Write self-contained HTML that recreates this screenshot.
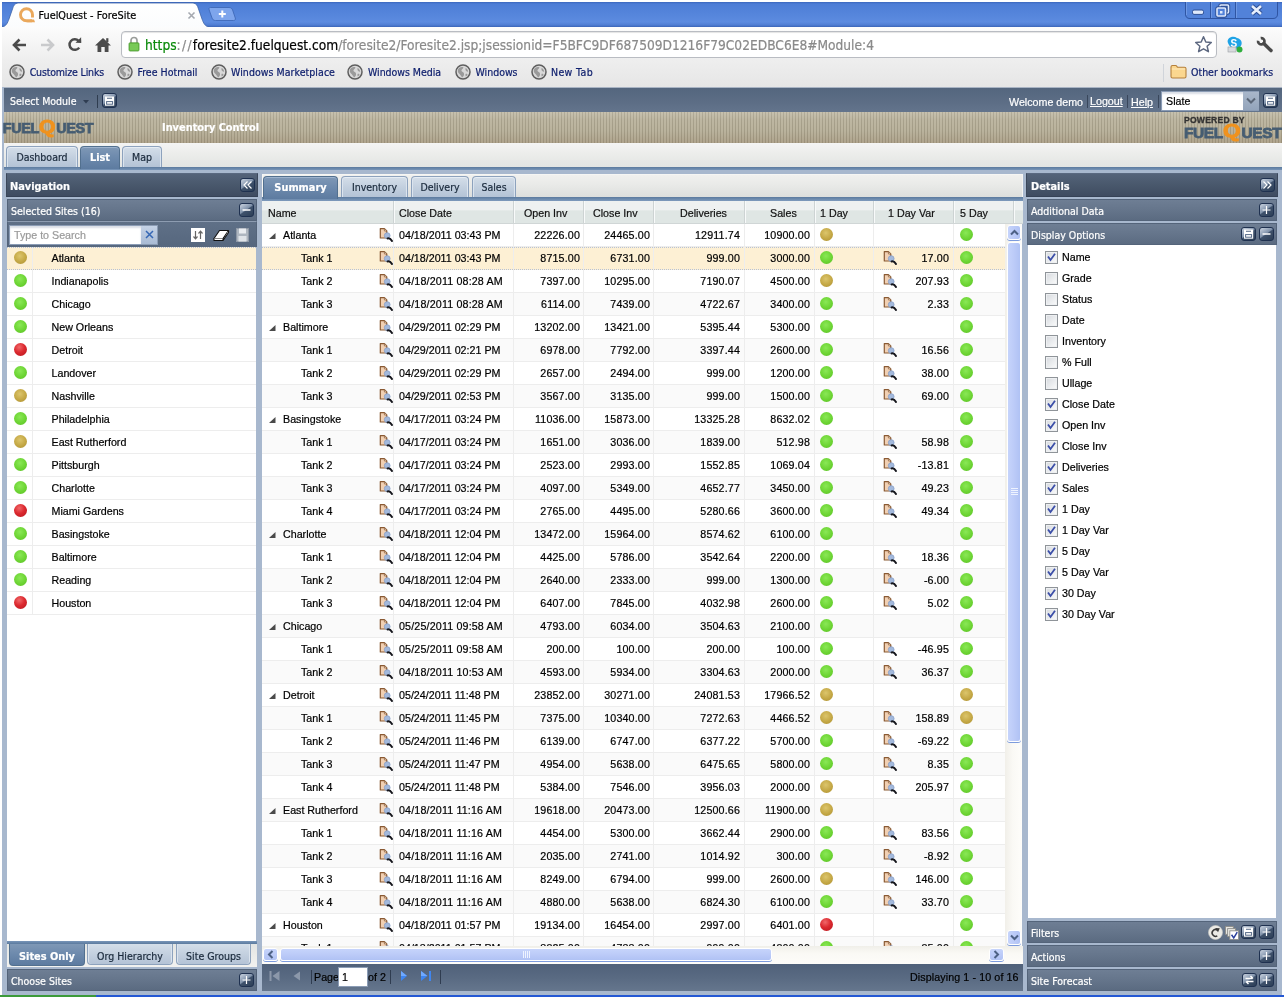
<!DOCTYPE html><html><head><meta charset="utf-8"><title>FuelQuest - ForeSite</title><style>
*{box-sizing:border-box;margin:0;padding:0}
html,body{width:1284px;height:997px;overflow:hidden;background:#fff}
body{position:relative;font-family:"Liberation Sans",sans-serif;font-size:10.6px;color:#000;-webkit-text-stroke:0.2px}
.abs{position:absolute}
.t{position:absolute;white-space:nowrap;line-height:14px;height:14px}
.tah{font-family:"DejaVu Sans Condensed","Liberation Sans",sans-serif;font-size:10.5px}
.tahb{font-family:"DejaVu Sans Condensed","Liberation Sans",sans-serif;font-size:10.9px;font-weight:bold}
svg{position:absolute;overflow:visible}
#win{position:absolute;left:0;top:0;width:1284px;height:997px;overflow:hidden;will-change:transform}
#winbg{position:absolute;left:0;top:0;width:1284px;height:997px;background:#a8b8ce}
/* chrome */
#titlebar{position:absolute;left:0;top:2px;width:1284px;height:25px;background:linear-gradient(#3b67bd 0,#4d7dd6 2px,#5585db 12px,#5c8be0 20px,#4f7dd3 23px,#3a64b8 25px)}
#toolbar{position:absolute;left:0;top:27px;width:1284px;height:33px;background:linear-gradient(#fcfcfc,#eeeeee)}
#bmbar{position:absolute;left:0;top:60px;width:1284px;height:27px;background:linear-gradient(#eeeeee,#e6e6e6)}
#url{position:absolute;left:121px;top:31px;width:1096px;height:27px;border:1px solid #b9bcc2;border-radius:4px;background:#fff;box-shadow:inset 0 1px 1px #e4e4e4}
.bm{position:absolute;top:64.5px;height:14px;line-height:14px;font-family:"DejaVu Sans Condensed","Liberation Sans",sans-serif;font-size:10.5px;color:#10216e;white-space:nowrap}
/* app */
#appbar{position:absolute;left:4px;top:87px;width:1278px;height:25px;background:linear-gradient(#54667e,#5b6c84 50%,#63748c);border-top:1px solid #a9b4c4}
#banner{position:absolute;left:4px;top:112px;width:1278px;height:31px;background:repeating-linear-gradient(90deg,#bab39d 0,#bab39d 2px,#a39c86 2px,#a39c86 3px)}
#banner:after{content:"";position:absolute;left:0;top:0;right:0;bottom:0;background:linear-gradient(rgba(255,255,255,.18),rgba(255,255,255,.05) 25%,rgba(255,255,255,0) 60%,rgba(90,50,20,.12))}
#tabstrip{position:absolute;left:4px;top:143px;width:1278px;height:24px;background:linear-gradient(#f4f4f3,#ebecea 50%,#e3e5e3)}
#tabline{position:absolute;left:4px;top:167px;width:1278px;height:3px;background:linear-gradient(#5b7a9e,#7895b8)}
.tab{position:absolute;height:21px;border:1px solid #8da2bd;border-bottom:none;border-radius:4px 4px 0 0;background:linear-gradient(#d4dee9,#c3d0df 50%,#b4c3d6);text-align:center;line-height:20px;font-family:"DejaVu Sans Condensed","Liberation Sans",sans-serif;font-size:10.5px;color:#1a2a3c;box-shadow:inset 0 1px 0 #e6edf4, inset 1px 0 0 #dbe4ee, inset -1px 0 0 #dbe4ee}
.tab.on{background:linear-gradient(#7f98b6,#6c89ac 50%,#5d7ba0);border-color:#52708f;color:#fff;font-weight:bold;font-size:10.9px;box-shadow:inset 0 1px 0 #9db3ce;height:23px}
</style></head><body><div id="win"><div id="winbg"></div>
<div id="titlebar"></div>
<svg style="left:2px;top:2px" width="240" height="26" viewBox="0 0 240 26"><defs><linearGradient id="tg" x1="0" y1="0" x2="0" y2="1"><stop offset="0" stop-color="#ffffff"/><stop offset="1" stop-color="#fbfcfd"/></linearGradient></defs><path d="M0 25.500 L0 25 C4 24.500 5.500 21 7 17 L10.500 7 C11.500 3.500 12.500 1.500 16 1 L191 1 C194.500 1.500 195.500 3.500 196.500 7 L200 17 C201.500 21 203 24.500 207 25 L207 25.500 Z" fill="url(#tg)"/><path d="M0 25 C4 24.500 5.500 21 7 17 L10.500 7 C11.500 3.500 12.500 1.500 16 1 L191 1 C194.500 1.500 195.500 3.500 196.500 7 L200 17 C201.500 21 203 24.500 207 25" fill="none" stroke="#3c63a8" stroke-width="0.8"/><path d="M208.500 5.500 L227 5.500 C229 5.500 230 6.500 230.600 8 L233.300 16 C233.800 17.600 233 18.500 231.500 18.500 L213.500 18.500 C211.500 18.500 210.600 17.600 210 16 L207.200 8 C206.700 6.500 207 5.500 208.500 5.500 Z" fill="#7ea5ec" stroke="#3f69b8" stroke-width="0.9"/><path d="M220.300 8.500 v7 M216.800 12 h7" stroke="#fff" stroke-width="2"/></svg>
<svg style="left:19px;top:7px" width="17" height="17" viewBox="0 0 17 17"><path d="M13 13.700 H7.500 A6 6 0 1 1 13.500 7.700 V 10.500" fill="none" stroke="#eaa85c" stroke-width="2.900"/><path d="M11.500 12.400 H15 L16 15.200 H8 Z" fill="#eaa85c"/></svg>
<div class="t tah" style="left:38.5px;top:8.5px;font-size:10.8px;color:#000">FuelQuest - ForeSite</div>
<svg style="left:187px;top:11px" width="9" height="9" viewBox="0 0 9 9"><path d="M1.5 1.5 L7.5 7.5 M7.5 1.5 L1.5 7.5" stroke="#a5a9b0" stroke-width="1.6"/></svg>
<svg style="left:1185px;top:-2px" width="96" height="22" viewBox="0 0 96 22"><path d="M0.500 0 L0.500 16 C0.500 19 2 20.500 5 20.500 L88 20.500 C91 20.500 92.500 19 92.500 16 L92.500 0 Z" fill="#5282d9" stroke="#2f55a3" stroke-width="1"/><path d="M25.500 0 V20 M50.500 0 V20" stroke="#2f55a3" stroke-width="1"/><path d="M26.500 0 V20 M51.500 0 V20 M1.500 0 V17" stroke="#7ba2ea" stroke-width="1" opacity=".7"/><rect x="7.500" y="12" width="11" height="4.400" rx="1.500" fill="#dfe9fb" stroke="#2c4f97" stroke-width="1"/><rect x="35" y="7" width="8.500" height="8" rx="1" fill="#5282d9" stroke="#2c4f97" stroke-width="3.400"/><rect x="35" y="7" width="8.500" height="8" rx="1" fill="none" stroke="#dfe9fb" stroke-width="1.600"/><rect x="32" y="10" width="8.500" height="8" rx="1" fill="#5282d9" stroke="#2c4f97" stroke-width="3.400"/><rect x="32" y="10" width="8.500" height="8" rx="1" fill="#5282d9" stroke="#dfe9fb" stroke-width="1.600"/><rect x="35" y="13" width="2.500" height="2.500" fill="#dfe9fb"/><path d="M67 8 L76 16 M76 8 L67 16" stroke="#2c4f97" stroke-width="4.600"/><path d="M67 8 L76 16 M76 8 L67 16" stroke="#e6eefc" stroke-width="2.600"/></svg>
<div id="toolbar"></div><div id="bmbar"></div><div id="url"></div>
<svg style="left:10px;top:35px" width="20" height="20" viewBox="0 0 20 20"><path d="M16 10 H5 M9.500 4.500 L4 10 L9.500 15.500" fill="none" stroke="#4b4b4b" stroke-width="2.6" stroke-linejoin="miter"/></svg>
<svg style="left:38px;top:35px" width="20" height="20" viewBox="0 0 20 20"><path d="M3 10 H14 M9.500 4.500 L15 10 L9.500 15.500" fill="none" stroke="#c9cacc" stroke-width="2.6"/></svg>
<svg style="left:65px;top:35px" width="20" height="20" viewBox="0 0 20 20"><path d="M14.200 12.600 A5.300 5.300 0 1 1 13.600 5.800" fill="none" stroke="#4b4b4b" stroke-width="2.500"/><path d="M10.500 7.800 L16.300 8 L16.100 2.200 Z" fill="#4b4b4b"/></svg>
<svg style="left:93px;top:35px" width="20" height="20" viewBox="0 0 20 20"><path d="M2 10.500 L10 3 L18 10.500 L15.500 10.500 L15.500 17 L11.700 17 L11.700 12 L8.300 12 L8.300 17 L4.500 17 L4.500 10.500 Z" fill="#4b4b4b"/><rect x="13.200" y="3.200" width="2.200" height="4" fill="#4b4b4b"/></svg>
<svg style="left:128px;top:36px" width="12" height="16" viewBox="0 0 12 16"><path d="M3 7 V4.500 A3 3 0 0 1 9 4.500 V7" fill="none" stroke="#9a9d9a" stroke-width="1.700"/><rect x="1" y="6.800" width="10" height="8.200" rx="1" fill="#6cc24a" stroke="#4f9a35" stroke-width="0.8"/><path d="M2 9 H10 M2 11 H10 M2 13 H10" stroke="#8ed66f" stroke-width="0.8"/></svg>
<div class="t tah" style="left:145px;top:36px;height:18px;line-height:18px;font-size:13.64px;color:#8a8a8a"><span style="color:#0b8a0b">https</span><span style="letter-spacing:1.3px">://</span><span style="color:#000">foresite2.fuelquest.com</span>/foresite2/Foresite2.jsp;jsessionid=F5BFC9DF687509D1216F79C02EDBC6E8#Module:4</div>
<svg style="left:1194px;top:35px" width="19" height="19" viewBox="0 0 19 19"><path d="M9.500 1.800 L11.800 7 L17.300 7.500 L13.100 11.200 L14.400 16.700 L9.500 13.800 L4.600 16.700 L5.900 11.200 L1.700 7.500 L7.200 7 Z" fill="#fff" stroke="#5d6880" stroke-width="1.500" stroke-linejoin="round"/></svg>
<svg style="left:1225px;top:35px" width="20" height="20" viewBox="0 0 20 20"><path d="M3 8 C1 3 8 0 12 3 C17 4 18 9 15 12 C12 15 5 14 3 8 Z" fill="#1fa3e6"/><text x="5.500" y="11.500" font-family="Liberation Sans,sans-serif" font-weight="bold" font-size="10" fill="#fff">S</text><rect x="3" y="12" width="8" height="5" fill="#d8dadd" stroke="#9a9ea4" stroke-width="0.600"/><circle cx="14.500" cy="14.500" r="3" fill="#2fae3c"/></svg>
<svg style="left:1256px;top:36px" width="18" height="18" viewBox="0 0 18 18"><path d="M4.720 2.100 A3.200 3.200 0 1 1 2.100 4.720" fill="none" stroke="#4a4a4a" stroke-width="2.700"/><path d="M7.800 7.600 L15 14.600" stroke="#4a4a4a" stroke-width="3.500" stroke-linecap="round"/></svg>
<svg style="left:9px;top:64px" width="16" height="16" viewBox="0 0 16 16"><circle cx="8" cy="8" r="7" fill="#d9d9d9" stroke="#5e5e5e" stroke-width="1.500"/><path d="M3 5.500 C4.500 3 7 2.500 8.500 3.500 C8 5 6 5.500 6.500 7 C7 8 8.500 8 9 9.500 C9.500 11.500 8 13 7 13.500 C6 11.500 5 10.500 4 9.500 C3 8.500 2.500 7 3 5.500 Z M10.500 4 C12 4.500 13 6 13.200 7.500 C12 8 11 7 10.500 6 Z M10.500 10 C11.500 9.500 12.500 10 12.500 11 C12 12 11 12.500 10.500 12 Z" fill="#9a9a9a"/></svg>
<div class="bm" style="left:29.7px;letter-spacing:-0.171px">Customize Links</div>
<svg style="left:117px;top:64px" width="16" height="16" viewBox="0 0 16 16"><circle cx="8" cy="8" r="7" fill="#d9d9d9" stroke="#5e5e5e" stroke-width="1.500"/><path d="M3 5.500 C4.500 3 7 2.500 8.500 3.500 C8 5 6 5.500 6.500 7 C7 8 8.500 8 9 9.500 C9.500 11.500 8 13 7 13.500 C6 11.500 5 10.500 4 9.500 C3 8.500 2.500 7 3 5.500 Z M10.500 4 C12 4.500 13 6 13.200 7.500 C12 8 11 7 10.500 6 Z M10.500 10 C11.500 9.500 12.500 10 12.500 11 C12 12 11 12.500 10.500 12 Z" fill="#9a9a9a"/></svg>
<div class="bm" style="left:137.5px;letter-spacing:0.018px">Free Hotmail</div>
<svg style="left:210.5px;top:64px" width="16" height="16" viewBox="0 0 16 16"><circle cx="8" cy="8" r="7" fill="#d9d9d9" stroke="#5e5e5e" stroke-width="1.500"/><path d="M3 5.500 C4.500 3 7 2.500 8.500 3.500 C8 5 6 5.500 6.500 7 C7 8 8.500 8 9 9.500 C9.500 11.500 8 13 7 13.500 C6 11.500 5 10.500 4 9.500 C3 8.500 2.500 7 3 5.500 Z M10.500 4 C12 4.500 13 6 13.200 7.500 C12 8 11 7 10.500 6 Z M10.500 10 C11.500 9.500 12.500 10 12.500 11 C12 12 11 12.500 10.500 12 Z" fill="#9a9a9a"/></svg>
<div class="bm" style="left:231px;letter-spacing:0.052px">Windows Marketplace</div>
<svg style="left:347px;top:64px" width="16" height="16" viewBox="0 0 16 16"><circle cx="8" cy="8" r="7" fill="#d9d9d9" stroke="#5e5e5e" stroke-width="1.500"/><path d="M3 5.500 C4.500 3 7 2.500 8.500 3.500 C8 5 6 5.500 6.500 7 C7 8 8.500 8 9 9.500 C9.500 11.500 8 13 7 13.500 C6 11.500 5 10.500 4 9.500 C3 8.500 2.500 7 3 5.500 Z M10.500 4 C12 4.500 13 6 13.200 7.500 C12 8 11 7 10.500 6 Z M10.500 10 C11.500 9.500 12.500 10 12.500 11 C12 12 11 12.500 10.500 12 Z" fill="#9a9a9a"/></svg>
<div class="bm" style="left:368px;letter-spacing:-0.041px">Windows Media</div>
<svg style="left:454.5px;top:64px" width="16" height="16" viewBox="0 0 16 16"><circle cx="8" cy="8" r="7" fill="#d9d9d9" stroke="#5e5e5e" stroke-width="1.500"/><path d="M3 5.500 C4.500 3 7 2.500 8.500 3.500 C8 5 6 5.500 6.500 7 C7 8 8.500 8 9 9.500 C9.500 11.500 8 13 7 13.500 C6 11.500 5 10.500 4 9.500 C3 8.500 2.500 7 3 5.500 Z M10.500 4 C12 4.500 13 6 13.200 7.500 C12 8 11 7 10.500 6 Z M10.500 10 C11.500 9.500 12.500 10 12.500 11 C12 12 11 12.500 10.500 12 Z" fill="#9a9a9a"/></svg>
<div class="bm" style="left:475.5px;letter-spacing:-0.022px">Windows</div>
<svg style="left:530.5px;top:64px" width="16" height="16" viewBox="0 0 16 16"><circle cx="8" cy="8" r="7" fill="#d9d9d9" stroke="#5e5e5e" stroke-width="1.500"/><path d="M3 5.500 C4.500 3 7 2.500 8.500 3.500 C8 5 6 5.500 6.500 7 C7 8 8.500 8 9 9.500 C9.500 11.500 8 13 7 13.500 C6 11.500 5 10.500 4 9.500 C3 8.500 2.500 7 3 5.500 Z M10.500 4 C12 4.500 13 6 13.200 7.500 C12 8 11 7 10.500 6 Z M10.500 10 C11.500 9.500 12.500 10 12.500 11 C12 12 11 12.500 10.500 12 Z" fill="#9a9a9a"/></svg>
<div class="bm" style="left:551px;letter-spacing:0.368px">New Tab</div>
<div class="abs" style="left:1163px;top:64px;width:1px;height:18px;background:#d0d4da"></div>
<svg style="left:1170px;top:64px" width="17" height="15" viewBox="0 0 17 15"><path d="M1 3 C1 2 1.500 1.500 2.500 1.500 L6 1.500 L7.500 3.200 L14.500 3.200 C15.500 3.200 16 3.700 16 4.700 L16 12.500 C16 13.500 15.500 14 14.500 14 L2.500 14 C1.500 14 1 13.500 1 12.500 Z" fill="#fbd78f" stroke="#b5803c" stroke-width="1.100"/><path d="M1.800 5 H15.200" stroke="#fde9bd" stroke-width="1"/></svg>
<div class="bm" style="left:1191px">Other bookmarks</div>
<style>
.tbtn{position:absolute;width:15px;height:14px;border:1px solid #1f3150;border-radius:3px;background:linear-gradient(145deg,#c9d2de 0,#a3b1c4 25%,#7f91a9 46%,#3f526c 52%,#2c3e56 100%)}
.ph{position:absolute;height:24px;background:linear-gradient(#546379,#49586c 50%,#3f4c61);border:1px solid #3b485d;border-color:#5a6980 #3b475a #364256 #3b475a}
.sh{position:absolute;height:22px;background:linear-gradient(#6e7e94,#65758b 50%,#5b6b81);border:1px solid #54647a}
.pt{position:absolute;color:#fff;white-space:nowrap;line-height:14px;height:14px}
.wbody{position:absolute;background:#fff}
</style>
<div id="appbar"></div><div id="banner"></div><div id="tabstrip"></div><div id="tabline"></div>
<div class="pt tah" style="left:10px;top:94px">Select Module</div>
<svg style="left:83px;top:100px" width="6" height="3.500" viewBox="0 0 6 3.500"><path d="M0 0 H6 L3 3.500 Z" fill="#2f3d52"/></svg>
<div class="abs" style="left:97px;top:95px;width:1px;height:13px;background:#2f3d50"></div>
<div class="tbtn" style="left:102px;top:93px;height:15px"></div>
<svg style="left:102px;top:93.5px" width="15" height="14" viewBox="0 0 15 14"><rect x="3" y="2.500" width="9.200" height="9.200" fill="#fff"/><rect x="5" y="3.700" width="5" height="1.300" fill="#7c8ba1"/><rect x="4.600" y="7.600" width="6" height="2.600" fill="#fff" stroke="#566a88" stroke-width="1"/></svg>
<div class="pt" style="left:1009px;top:95px;font-size:10.7px">Welcome demo</div>
<div class="abs" style="left:1087px;top:95px;width:1px;height:13px;background:#39475c"></div>
<div class="pt" style="left:1090px;top:94px;font-size:10.7px;text-decoration:underline">Logout</div>
<div class="abs" style="left:1127px;top:95px;width:1px;height:13px;background:#39475c"></div>
<div class="pt" style="left:1131px;top:95px;font-size:10.7px;text-decoration:underline">Help</div>
<div class="abs" style="left:1158px;top:95px;width:1px;height:13px;background:#39475c"></div>
<div class="abs" style="left:1161px;top:91px;width:98px;height:20px;background:#fff;border:1px solid #8b9cb5;box-shadow:inset 0 2px 2px #d9dee6"></div>
<div class="t" style="left:1166px;top:94px;font-size:10.7px;color:#000">Slate</div>
<div class="abs" style="left:1243px;top:92px;width:16px;height:18px;background:linear-gradient(#a9b7ca,#93a4bb)"></div>
<svg style="left:1246px;top:97px" width="10" height="8" viewBox="0 0 10 8"><path d="M1 1.500 L5 5.500 L9 1.500" fill="none" stroke="#5b6778" stroke-width="2"/></svg>
<div class="tbtn" style="left:1263px;top:93px;height:15px"></div>
<svg style="left:1263px;top:93.5px" width="15" height="14" viewBox="0 0 15 14"><rect x="3" y="2.500" width="9.200" height="9.200" fill="#fff"/><rect x="5" y="3.700" width="5" height="1.300" fill="#7c8ba1"/><rect x="4.600" y="7.600" width="6" height="2.600" fill="#fff" stroke="#566a88" stroke-width="1"/></svg>
<div class="t" style="left:2.8px;top:120px;font-family:Liberation Sans,sans-serif;font-weight:bold;font-size:14.40px;color:#465d72;letter-spacing:-0.35px;-webkit-text-stroke:0.75px #465d72;height:16.0px;line-height:16.0px">FUEL<span style="display:inline-block;width:17.3px"></span>UEST</div>
<div class="t" style="left:39.4px;top:114.6px;font-family:Liberation Sans,sans-serif;font-weight:bold;font-size:17.6px;color:#f0921d;-webkit-text-stroke:0.90px #f0921d;height:24.0px;line-height:24.0px;transform:scaleX(1.2);transform-origin:0 0">Q</div>
<div class="pt tahb" style="left:162px;top:121px;font-size:10.9px">Inventory Control</div>
<div class="t" style="left:1184px;top:114.5px;height:10px;line-height:10px;font-family:Liberation Sans,sans-serif;font-weight:bold;font-size:8.6px;color:#333;letter-spacing:.2px;-webkit-text-stroke:0.3px #333">POWERED BY</div>
<div class="t" style="left:1184px;top:123.5px;font-family:Liberation Sans,sans-serif;font-weight:bold;font-size:15.48px;color:#465d72;letter-spacing:-0.38px;-webkit-text-stroke:0.81px #465d72;height:17.2px;line-height:17.2px">FUEL<span style="display:inline-block;width:18.6px"></span>UEST</div>
<div class="t" style="left:1223.3px;top:117.7px;font-family:Liberation Sans,sans-serif;font-weight:bold;font-size:18.9px;color:#f0921d;-webkit-text-stroke:0.97px #f0921d;height:25.8px;line-height:25.8px;transform:scaleX(1.2);transform-origin:0 0">Q</div>
<div class="tab" style="left:6px;top:146px;width:72px">Dashboard</div>
<div class="tab on" style="left:80px;top:146px;width:40px;line-height:21px">List</div>
<div class="tab" style="left:122px;top:146px;width:40px">Map</div>
<style>
.dot{position:absolute;width:13px;height:13px;border-radius:50%}
.dot.g{background:radial-gradient(circle at 45% 38%,#8ae856 0,#6fd636 50%,#58be22 100%)}
.dot.y{background:radial-gradient(circle at 45% 38%,#dcc56c 0,#c6aa48 50%,#ab8e2f 100%)}
.dot.r{background:radial-gradient(circle at 40% 32%,#f0686a 0,#dc2a30 45%,#b5151c 100%)}
.lrow{position:absolute;left:7px;width:249px;height:23px;border-bottom:1px solid #ededed;background:#fff}
.lrow .sep{position:absolute;left:25px;top:0;width:1px;height:22px;background:#ededed}
.lrow .nm{position:absolute;left:44.5px;top:4px;line-height:14px;white-space:nowrap;font-size:10.7px}
.lrow .dot{left:7px;top:4px}
.lrow.sel{background:#fdf0d4;border-bottom:1px dotted #b7c2d6;border-top:1px dotted #b7c2d6}
.btab{position:absolute;top:944px;height:21px;border:1px solid #8da2bd;border-top:none;border-radius:0 0 4px 4px;background:linear-gradient(#d4dee9,#c3d0df 50%,#b4c3d6);text-align:center;line-height:25px;font-family:"DejaVu Sans Condensed","Liberation Sans",sans-serif;font-size:10.5px;color:#1a2a3c;box-shadow:inset 1px 0 0 #dbe4ee, inset -1px 0 0 #dbe4ee}
.btab.on{background:linear-gradient(#7f98b6,#6c89ac 50%,#5d7ba0);border-color:#52708f;color:#fff;font-weight:bold;font-size:10.9px;box-shadow:none;height:22px}
</style>
<div class="ph" style="left:6px;top:173px;width:252px"></div>
<div class="pt tahb" style="left:10px;top:180px">Navigation</div>
<div class="tbtn" style="left:240px;top:178px;height:14px"></div>
<svg style="left:240px;top:178px" width="15" height="14" viewBox="0 0 15 14"><path d="M7.500 3.500 L4 7 L7.500 10.500 M11.500 3.500 L8 7 L11.500 10.500" fill="none" stroke="#fff" stroke-width="1.200"/></svg>
<div class="sh" style="left:7px;top:199px;width:250px"></div>
<div class="pt tah" style="left:11px;top:204px">Selected Sites (16)</div>
<div class="tbtn" style="left:239px;top:203px;height:14px"></div>
<svg style="left:239px;top:203px" width="15" height="14" viewBox="0 0 15 14"><path d="M3.500 7 H11.500" stroke="#fff" stroke-width="1.500"/></svg>
<div class="abs" style="left:7px;top:221px;width:250px;height:26px;background:linear-gradient(#5f7087,#56677e);border-left:1px solid #54647a;border-right:1px solid #54647a;border-top:1px solid #8d9cb1"></div>
<div class="abs" style="left:9px;top:225px;width:133px;height:20px;background:#fff;border:1px solid #8b9cb5;box-shadow:inset 0 2px 2px #d9dee6"></div>
<div class="t" style="left:14px;top:228px;font-size:10.7px;color:#9a9a9a">Type to Search</div>
<div class="abs" style="left:141px;top:225px;width:17px;height:20px;background:linear-gradient(#c4d2e6,#a9bbd4);border:1px solid #8b9cb5;border-left:none"></div>
<svg style="left:145px;top:230px" width="9" height="9" viewBox="0 0 9 9"><path d="M1 1 L8 8 M8 1 L1 8" stroke="#3567b5" stroke-width="1.500"/></svg>
<svg style="left:191px;top:228px" width="14" height="14" viewBox="0 0 14 14"><rect x="0" y="0" width="14" height="14" fill="#fff"/><path d="M4.500 3 V10.500 M2.500 8.500 L4.500 10.800 L6.500 8.500 M9.500 11 V3.500 M7.500 5.500 L9.500 3.200 L11.500 5.500" fill="none" stroke="#666" stroke-width="1.200"/></svg>
<svg style="left:213px;top:229px" width="17" height="13" viewBox="0 0 17 13"><path d="M6.500 1.500 L15.500 1.500 L10 9.500 L1 9.500 Z" fill="#fff" stroke="#111" stroke-width="1.100" stroke-linejoin="round"/><path d="M1 9.500 L1 11.500 L10 11.500 L10 9.500 M10 11.500 L15.500 3.500 L15.500 1.500" fill="#fff" stroke="#111" stroke-width="1.100" stroke-linejoin="round"/></svg>
<svg style="left:236px;top:228px" width="13" height="14" viewBox="0 0 13 14"><rect x="0.500" y="0.500" width="12" height="13" fill="#aeb6c0" stroke="#8e98a6" stroke-width="1"/><rect x="3" y="0.500" width="7" height="5" fill="#e9ecf0"/><rect x="2.500" y="8" width="8" height="5.500" fill="#dfe3e8"/></svg>
<div class="wbody" style="left:7px;top:247px;width:249px;height:694px"></div>
<div class="lrow sel" style="top:247px;height:23px"><div class="dot y" style="top:3px"></div><div class="sep" style="top:-1px"></div><div class="nm" style="top:3px">Atlanta</div></div>
<div class="lrow" style="top:270px"><div class="dot g"></div><div class="sep"></div><div class="nm">Indianapolis</div></div>
<div class="lrow" style="top:293px"><div class="dot g"></div><div class="sep"></div><div class="nm">Chicago</div></div>
<div class="lrow" style="top:316px"><div class="dot g"></div><div class="sep"></div><div class="nm">New Orleans</div></div>
<div class="lrow" style="top:339px"><div class="dot r"></div><div class="sep"></div><div class="nm">Detroit</div></div>
<div class="lrow" style="top:362px"><div class="dot g"></div><div class="sep"></div><div class="nm">Landover</div></div>
<div class="lrow" style="top:385px"><div class="dot y"></div><div class="sep"></div><div class="nm">Nashville</div></div>
<div class="lrow" style="top:408px"><div class="dot g"></div><div class="sep"></div><div class="nm">Philadelphia</div></div>
<div class="lrow" style="top:431px"><div class="dot y"></div><div class="sep"></div><div class="nm">East Rutherford</div></div>
<div class="lrow" style="top:454px"><div class="dot g"></div><div class="sep"></div><div class="nm">Pittsburgh</div></div>
<div class="lrow" style="top:477px"><div class="dot g"></div><div class="sep"></div><div class="nm">Charlotte</div></div>
<div class="lrow" style="top:500px"><div class="dot r"></div><div class="sep"></div><div class="nm">Miami Gardens</div></div>
<div class="lrow" style="top:523px"><div class="dot g"></div><div class="sep"></div><div class="nm">Basingstoke</div></div>
<div class="lrow" style="top:546px"><div class="dot g"></div><div class="sep"></div><div class="nm">Baltimore</div></div>
<div class="lrow" style="top:569px"><div class="dot g"></div><div class="sep"></div><div class="nm">Reading</div></div>
<div class="lrow" style="top:592px"><div class="dot r"></div><div class="sep"></div><div class="nm">Houston</div></div>
<div class="abs" style="left:7px;top:941px;width:250px;height:3px;background:linear-gradient(#7895b8,#5b7a9e)"></div>
<div class="abs" style="left:7px;top:944px;width:250px;height:23px;background:linear-gradient(#e3e5e3,#f2f2f0)"></div>
<div class="btab on" style="left:9px;width:76px">Sites Only</div>
<div class="btab" style="left:87px;width:86px">Org Hierarchy</div>
<div class="btab" style="left:176px;width:75px">Site Groups</div>
<div class="sh" style="left:7px;top:969px;width:250px"></div>
<div class="pt tah" style="left:11px;top:974px">Choose Sites</div>
<div class="tbtn" style="left:239px;top:973px;height:14px"></div>
<svg style="left:239px;top:973px" width="15" height="14" viewBox="0 0 15 14"><path d="M7.500 3 V11 M3.500 7 H11.500" stroke="#fff" stroke-width="1.200"/></svg>
<style>
#gtabs{position:absolute;left:262px;top:174px;width:761px;height:23px;background:linear-gradient(#f1f1ef,#e8e9e7 50%,#dddfdd);border:1px solid #f6f6f4;border-bottom:none}
.gtab{position:absolute;top:176px;height:21px;border:1px solid #8da2bd;border-bottom:none;border-radius:4px 4px 0 0;background:linear-gradient(#d4dee9,#c3d0df 50%,#b4c3d6);text-align:center;line-height:20px;font-family:"DejaVu Sans Condensed","Liberation Sans",sans-serif;font-size:10.5px;color:#1a2a3c;box-shadow:inset 0 1px 0 #e6edf4, inset 1px 0 0 #dbe4ee, inset -1px 0 0 #dbe4ee}
.gtab.on{background:linear-gradient(#7f98b6,#6c89ac 50%,#5d7ba0);border-color:#52708f;color:#fff;font-weight:bold;font-size:10.9px;box-shadow:inset 0 1px 0 #9db3ce;height:23px;line-height:21px}
#ghead{position:absolute;left:262px;top:201px;width:761px;height:23px;background:linear-gradient(#eef1f1 0,#eef1f1 40%,#dfe6e4 45%,#dfe6e4 100%);border-bottom:1px solid #d0d6d6}
.hc{position:absolute;top:206px;line-height:14px;height:14px;font-size:10.7px;color:#111;white-space:nowrap}
.hs{position:absolute;top:201px;width:2px;height:22px;border-left:1px solid #cdd3d3;border-right:1px solid #f8fafa}
#gbody{position:absolute;left:262px;top:224px;width:743px;height:722px;overflow:hidden;background:#fff}
.gr{position:absolute;left:0;width:743px;height:23px;border-bottom:1px solid #ededed;background:#fff}
.gr.alt{background:#fafafa}
.gr.sel{background:#fdf0d4;border-bottom:1px dotted #b7c2d6;border-top:1px dotted #b7c2d6}
.gr div{position:absolute;top:4px;line-height:14px;height:14px;font-size:10.7px;white-space:nowrap}
.gr .n{text-align:right;letter-spacing:0.15px}
.gr .cs{top:0;width:1px;height:22px;background:#ededed}
.gr .dot{top:4px;width:13px;height:13px}
</style>
<div id="gtabs"></div>
<div class="abs" style="left:262px;top:197px;width:761px;height:4px;background:linear-gradient(#5b7a9e,#7f9bbd)"></div>
<div class="gtab on" style="left:263px;width:75px">Summary</div>
<div class="gtab" style="left:341px;width:67px">Inventory</div>
<div class="gtab" style="left:411px;width:58px">Delivery</div>
<div class="gtab" style="left:472px;width:44px">Sales</div>
<div id="ghead"></div>
<div class="hc" style="left:268px">Name</div>
<div class="hc" style="left:399px">Close Date</div>
<div class="hc" style="left:524px">Open Inv</div>
<div class="hc" style="left:593px">Close Inv</div>
<div class="hc" style="left:680px">Deliveries</div>
<div class="hc" style="left:770px">Sales</div>
<div class="hc" style="left:820px">1 Day</div>
<div class="hc" style="left:888px">1 Day Var</div>
<div class="hc" style="left:960px">5 Day</div>
<div class="hs" style="left:393px"></div>
<div class="hs" style="left:513px"></div>
<div class="hs" style="left:583px"></div>
<div class="hs" style="left:653px"></div>
<div class="hs" style="left:744px"></div>
<div class="hs" style="left:814px"></div>
<div class="hs" style="left:873px"></div>
<div class="hs" style="left:953px"></div>
<div class="hs" style="left:1013px"></div>
<div id="gbody">
<div class="gr" style="top:0px">
<svg style="left:7px;top:9px" width="7" height="6" viewBox="0 0 7 6"><path d="M6.500 0 L6.500 6 L0 6 Z" fill="#4a4a4a"/></svg>
<div style="left:21px;top:4px">Atlanta</div>
<svg style="left:117px;top:3px" width="14" height="15" viewBox="0 0 14 15"><path d="M1.300 1.600 H5.400 L7.800 4 V11 H1.300 Z" fill="#f1d0b3" stroke="#8a5a33" stroke-width="1.200" stroke-linejoin="round"/><path d="M5.400 1.600 V4 H7.800 Z" fill="#fdf0e2" stroke="#8a5a33" stroke-width="0.700"/><circle cx="8.200" cy="8.600" r="2.900" fill="#a3b9dc" stroke="#8199c4" stroke-width="0.700"/><path d="M8.600 11.400 Q11.200 11 13 14" fill="none" stroke="#15161c" stroke-width="2" stroke-linecap="round"/></svg>
<div style="left:137px;top:4px">04/18/2011 03:43 PM</div>
<div class="n" style="left:248px;width:70px;top:4px">22226.00</div>
<div class="n" style="left:318px;width:70px;top:4px">24465.00</div>
<div class="n" style="left:408px;width:70px;top:4px">12911.74</div>
<div class="n" style="left:478px;width:70px;top:4px">10900.00</div>
<div class="dot y" style="left:558px;top:4px"></div>
<div class="dot g" style="left:698px;top:4px"></div>
<div class="cs" style="left:131px;top:0px"></div>
<div class="cs" style="left:251px;top:0px"></div>
<div class="cs" style="left:321px;top:0px"></div>
<div class="cs" style="left:391px;top:0px"></div>
<div class="cs" style="left:482px;top:0px"></div>
<div class="cs" style="left:552px;top:0px"></div>
<div class="cs" style="left:611px;top:0px"></div>
<div class="cs" style="left:691px;top:0px"></div>
</div>
<div class="gr sel" style="top:23px;height:23px">
<div style="left:39px;top:3px">Tank 1</div>
<svg style="left:117px;top:2px" width="14" height="15" viewBox="0 0 14 15"><path d="M1.300 1.600 H5.400 L7.800 4 V11 H1.300 Z" fill="#f1d0b3" stroke="#8a5a33" stroke-width="1.200" stroke-linejoin="round"/><path d="M5.400 1.600 V4 H7.800 Z" fill="#fdf0e2" stroke="#8a5a33" stroke-width="0.700"/><circle cx="8.200" cy="8.600" r="2.900" fill="#a3b9dc" stroke="#8199c4" stroke-width="0.700"/><path d="M8.600 11.400 Q11.200 11 13 14" fill="none" stroke="#15161c" stroke-width="2" stroke-linecap="round"/></svg>
<div style="left:137px;top:3px">04/18/2011 03:43 PM</div>
<div class="n" style="left:248px;width:70px;top:3px">8715.00</div>
<div class="n" style="left:318px;width:70px;top:3px">6731.00</div>
<div class="n" style="left:408px;width:70px;top:3px">999.00</div>
<div class="n" style="left:478px;width:70px;top:3px">3000.00</div>
<div class="dot g" style="left:558px;top:3px"></div>
<svg style="left:620.5px;top:2px" width="14" height="15" viewBox="0 0 14 15"><path d="M1.300 1.600 H5.400 L7.800 4 V11 H1.300 Z" fill="#f1d0b3" stroke="#8a5a33" stroke-width="1.200" stroke-linejoin="round"/><path d="M5.400 1.600 V4 H7.800 Z" fill="#fdf0e2" stroke="#8a5a33" stroke-width="0.700"/><circle cx="8.200" cy="8.600" r="2.900" fill="#a3b9dc" stroke="#8199c4" stroke-width="0.700"/><path d="M8.600 11.400 Q11.200 11 13 14" fill="none" stroke="#15161c" stroke-width="2" stroke-linecap="round"/></svg>
<div class="n" style="left:617px;width:70px;top:3px">17.00</div>
<div class="dot g" style="left:698px;top:3px"></div>
<div class="cs" style="left:131px;top:-1px"></div>
<div class="cs" style="left:251px;top:-1px"></div>
<div class="cs" style="left:321px;top:-1px"></div>
<div class="cs" style="left:391px;top:-1px"></div>
<div class="cs" style="left:482px;top:-1px"></div>
<div class="cs" style="left:552px;top:-1px"></div>
<div class="cs" style="left:611px;top:-1px"></div>
<div class="cs" style="left:691px;top:-1px"></div>
</div>
<div class="gr" style="top:46px">
<div style="left:39px;top:4px">Tank 2</div>
<svg style="left:117px;top:3px" width="14" height="15" viewBox="0 0 14 15"><path d="M1.300 1.600 H5.400 L7.800 4 V11 H1.300 Z" fill="#f1d0b3" stroke="#8a5a33" stroke-width="1.200" stroke-linejoin="round"/><path d="M5.400 1.600 V4 H7.800 Z" fill="#fdf0e2" stroke="#8a5a33" stroke-width="0.700"/><circle cx="8.200" cy="8.600" r="2.900" fill="#a3b9dc" stroke="#8199c4" stroke-width="0.700"/><path d="M8.600 11.400 Q11.200 11 13 14" fill="none" stroke="#15161c" stroke-width="2" stroke-linecap="round"/></svg>
<div style="left:137px;top:4px;letter-spacing:0.16px">04/18/2011 08:28 AM</div>
<div class="n" style="left:248px;width:70px;top:4px">7397.00</div>
<div class="n" style="left:318px;width:70px;top:4px">10295.00</div>
<div class="n" style="left:408px;width:70px;top:4px">7190.07</div>
<div class="n" style="left:478px;width:70px;top:4px">4500.00</div>
<div class="dot y" style="left:558px;top:4px"></div>
<svg style="left:620.5px;top:3px" width="14" height="15" viewBox="0 0 14 15"><path d="M1.300 1.600 H5.400 L7.800 4 V11 H1.300 Z" fill="#f1d0b3" stroke="#8a5a33" stroke-width="1.200" stroke-linejoin="round"/><path d="M5.400 1.600 V4 H7.800 Z" fill="#fdf0e2" stroke="#8a5a33" stroke-width="0.700"/><circle cx="8.200" cy="8.600" r="2.900" fill="#a3b9dc" stroke="#8199c4" stroke-width="0.700"/><path d="M8.600 11.400 Q11.200 11 13 14" fill="none" stroke="#15161c" stroke-width="2" stroke-linecap="round"/></svg>
<div class="n" style="left:617px;width:70px;top:4px">207.93</div>
<div class="dot g" style="left:698px;top:4px"></div>
<div class="cs" style="left:131px;top:0px"></div>
<div class="cs" style="left:251px;top:0px"></div>
<div class="cs" style="left:321px;top:0px"></div>
<div class="cs" style="left:391px;top:0px"></div>
<div class="cs" style="left:482px;top:0px"></div>
<div class="cs" style="left:552px;top:0px"></div>
<div class="cs" style="left:611px;top:0px"></div>
<div class="cs" style="left:691px;top:0px"></div>
</div>
<div class="gr alt" style="top:69px">
<div style="left:39px;top:4px">Tank 3</div>
<svg style="left:117px;top:3px" width="14" height="15" viewBox="0 0 14 15"><path d="M1.300 1.600 H5.400 L7.800 4 V11 H1.300 Z" fill="#f1d0b3" stroke="#8a5a33" stroke-width="1.200" stroke-linejoin="round"/><path d="M5.400 1.600 V4 H7.800 Z" fill="#fdf0e2" stroke="#8a5a33" stroke-width="0.700"/><circle cx="8.200" cy="8.600" r="2.900" fill="#a3b9dc" stroke="#8199c4" stroke-width="0.700"/><path d="M8.600 11.400 Q11.200 11 13 14" fill="none" stroke="#15161c" stroke-width="2" stroke-linecap="round"/></svg>
<div style="left:137px;top:4px;letter-spacing:0.16px">04/18/2011 08:28 AM</div>
<div class="n" style="left:248px;width:70px;top:4px">6114.00</div>
<div class="n" style="left:318px;width:70px;top:4px">7439.00</div>
<div class="n" style="left:408px;width:70px;top:4px">4722.67</div>
<div class="n" style="left:478px;width:70px;top:4px">3400.00</div>
<div class="dot g" style="left:558px;top:4px"></div>
<svg style="left:620.5px;top:3px" width="14" height="15" viewBox="0 0 14 15"><path d="M1.300 1.600 H5.400 L7.800 4 V11 H1.300 Z" fill="#f1d0b3" stroke="#8a5a33" stroke-width="1.200" stroke-linejoin="round"/><path d="M5.400 1.600 V4 H7.800 Z" fill="#fdf0e2" stroke="#8a5a33" stroke-width="0.700"/><circle cx="8.200" cy="8.600" r="2.900" fill="#a3b9dc" stroke="#8199c4" stroke-width="0.700"/><path d="M8.600 11.400 Q11.200 11 13 14" fill="none" stroke="#15161c" stroke-width="2" stroke-linecap="round"/></svg>
<div class="n" style="left:617px;width:70px;top:4px">2.33</div>
<div class="dot g" style="left:698px;top:4px"></div>
<div class="cs" style="left:131px;top:0px"></div>
<div class="cs" style="left:251px;top:0px"></div>
<div class="cs" style="left:321px;top:0px"></div>
<div class="cs" style="left:391px;top:0px"></div>
<div class="cs" style="left:482px;top:0px"></div>
<div class="cs" style="left:552px;top:0px"></div>
<div class="cs" style="left:611px;top:0px"></div>
<div class="cs" style="left:691px;top:0px"></div>
</div>
<div class="gr" style="top:92px">
<svg style="left:7px;top:9px" width="7" height="6" viewBox="0 0 7 6"><path d="M6.500 0 L6.500 6 L0 6 Z" fill="#4a4a4a"/></svg>
<div style="left:21px;top:4px">Baltimore</div>
<svg style="left:117px;top:3px" width="14" height="15" viewBox="0 0 14 15"><path d="M1.300 1.600 H5.400 L7.800 4 V11 H1.300 Z" fill="#f1d0b3" stroke="#8a5a33" stroke-width="1.200" stroke-linejoin="round"/><path d="M5.400 1.600 V4 H7.800 Z" fill="#fdf0e2" stroke="#8a5a33" stroke-width="0.700"/><circle cx="8.200" cy="8.600" r="2.900" fill="#a3b9dc" stroke="#8199c4" stroke-width="0.700"/><path d="M8.600 11.400 Q11.200 11 13 14" fill="none" stroke="#15161c" stroke-width="2" stroke-linecap="round"/></svg>
<div style="left:137px;top:4px">04/29/2011 02:29 PM</div>
<div class="n" style="left:248px;width:70px;top:4px">13202.00</div>
<div class="n" style="left:318px;width:70px;top:4px">13421.00</div>
<div class="n" style="left:408px;width:70px;top:4px">5395.44</div>
<div class="n" style="left:478px;width:70px;top:4px">5300.00</div>
<div class="dot g" style="left:558px;top:4px"></div>
<div class="dot g" style="left:698px;top:4px"></div>
<div class="cs" style="left:131px;top:0px"></div>
<div class="cs" style="left:251px;top:0px"></div>
<div class="cs" style="left:321px;top:0px"></div>
<div class="cs" style="left:391px;top:0px"></div>
<div class="cs" style="left:482px;top:0px"></div>
<div class="cs" style="left:552px;top:0px"></div>
<div class="cs" style="left:611px;top:0px"></div>
<div class="cs" style="left:691px;top:0px"></div>
</div>
<div class="gr alt" style="top:115px">
<div style="left:39px;top:4px">Tank 1</div>
<svg style="left:117px;top:3px" width="14" height="15" viewBox="0 0 14 15"><path d="M1.300 1.600 H5.400 L7.800 4 V11 H1.300 Z" fill="#f1d0b3" stroke="#8a5a33" stroke-width="1.200" stroke-linejoin="round"/><path d="M5.400 1.600 V4 H7.800 Z" fill="#fdf0e2" stroke="#8a5a33" stroke-width="0.700"/><circle cx="8.200" cy="8.600" r="2.900" fill="#a3b9dc" stroke="#8199c4" stroke-width="0.700"/><path d="M8.600 11.400 Q11.200 11 13 14" fill="none" stroke="#15161c" stroke-width="2" stroke-linecap="round"/></svg>
<div style="left:137px;top:4px">04/29/2011 02:21 PM</div>
<div class="n" style="left:248px;width:70px;top:4px">6978.00</div>
<div class="n" style="left:318px;width:70px;top:4px">7792.00</div>
<div class="n" style="left:408px;width:70px;top:4px">3397.44</div>
<div class="n" style="left:478px;width:70px;top:4px">2600.00</div>
<div class="dot g" style="left:558px;top:4px"></div>
<svg style="left:620.5px;top:3px" width="14" height="15" viewBox="0 0 14 15"><path d="M1.300 1.600 H5.400 L7.800 4 V11 H1.300 Z" fill="#f1d0b3" stroke="#8a5a33" stroke-width="1.200" stroke-linejoin="round"/><path d="M5.400 1.600 V4 H7.800 Z" fill="#fdf0e2" stroke="#8a5a33" stroke-width="0.700"/><circle cx="8.200" cy="8.600" r="2.900" fill="#a3b9dc" stroke="#8199c4" stroke-width="0.700"/><path d="M8.600 11.400 Q11.200 11 13 14" fill="none" stroke="#15161c" stroke-width="2" stroke-linecap="round"/></svg>
<div class="n" style="left:617px;width:70px;top:4px">16.56</div>
<div class="dot g" style="left:698px;top:4px"></div>
<div class="cs" style="left:131px;top:0px"></div>
<div class="cs" style="left:251px;top:0px"></div>
<div class="cs" style="left:321px;top:0px"></div>
<div class="cs" style="left:391px;top:0px"></div>
<div class="cs" style="left:482px;top:0px"></div>
<div class="cs" style="left:552px;top:0px"></div>
<div class="cs" style="left:611px;top:0px"></div>
<div class="cs" style="left:691px;top:0px"></div>
</div>
<div class="gr" style="top:138px">
<div style="left:39px;top:4px">Tank 2</div>
<svg style="left:117px;top:3px" width="14" height="15" viewBox="0 0 14 15"><path d="M1.300 1.600 H5.400 L7.800 4 V11 H1.300 Z" fill="#f1d0b3" stroke="#8a5a33" stroke-width="1.200" stroke-linejoin="round"/><path d="M5.400 1.600 V4 H7.800 Z" fill="#fdf0e2" stroke="#8a5a33" stroke-width="0.700"/><circle cx="8.200" cy="8.600" r="2.900" fill="#a3b9dc" stroke="#8199c4" stroke-width="0.700"/><path d="M8.600 11.400 Q11.200 11 13 14" fill="none" stroke="#15161c" stroke-width="2" stroke-linecap="round"/></svg>
<div style="left:137px;top:4px">04/29/2011 02:29 PM</div>
<div class="n" style="left:248px;width:70px;top:4px">2657.00</div>
<div class="n" style="left:318px;width:70px;top:4px">2494.00</div>
<div class="n" style="left:408px;width:70px;top:4px">999.00</div>
<div class="n" style="left:478px;width:70px;top:4px">1200.00</div>
<div class="dot g" style="left:558px;top:4px"></div>
<svg style="left:620.5px;top:3px" width="14" height="15" viewBox="0 0 14 15"><path d="M1.300 1.600 H5.400 L7.800 4 V11 H1.300 Z" fill="#f1d0b3" stroke="#8a5a33" stroke-width="1.200" stroke-linejoin="round"/><path d="M5.400 1.600 V4 H7.800 Z" fill="#fdf0e2" stroke="#8a5a33" stroke-width="0.700"/><circle cx="8.200" cy="8.600" r="2.900" fill="#a3b9dc" stroke="#8199c4" stroke-width="0.700"/><path d="M8.600 11.400 Q11.200 11 13 14" fill="none" stroke="#15161c" stroke-width="2" stroke-linecap="round"/></svg>
<div class="n" style="left:617px;width:70px;top:4px">38.00</div>
<div class="dot g" style="left:698px;top:4px"></div>
<div class="cs" style="left:131px;top:0px"></div>
<div class="cs" style="left:251px;top:0px"></div>
<div class="cs" style="left:321px;top:0px"></div>
<div class="cs" style="left:391px;top:0px"></div>
<div class="cs" style="left:482px;top:0px"></div>
<div class="cs" style="left:552px;top:0px"></div>
<div class="cs" style="left:611px;top:0px"></div>
<div class="cs" style="left:691px;top:0px"></div>
</div>
<div class="gr alt" style="top:161px">
<div style="left:39px;top:4px">Tank 3</div>
<svg style="left:117px;top:3px" width="14" height="15" viewBox="0 0 14 15"><path d="M1.300 1.600 H5.400 L7.800 4 V11 H1.300 Z" fill="#f1d0b3" stroke="#8a5a33" stroke-width="1.200" stroke-linejoin="round"/><path d="M5.400 1.600 V4 H7.800 Z" fill="#fdf0e2" stroke="#8a5a33" stroke-width="0.700"/><circle cx="8.200" cy="8.600" r="2.900" fill="#a3b9dc" stroke="#8199c4" stroke-width="0.700"/><path d="M8.600 11.400 Q11.200 11 13 14" fill="none" stroke="#15161c" stroke-width="2" stroke-linecap="round"/></svg>
<div style="left:137px;top:4px">04/29/2011 02:53 PM</div>
<div class="n" style="left:248px;width:70px;top:4px">3567.00</div>
<div class="n" style="left:318px;width:70px;top:4px">3135.00</div>
<div class="n" style="left:408px;width:70px;top:4px">999.00</div>
<div class="n" style="left:478px;width:70px;top:4px">1500.00</div>
<div class="dot g" style="left:558px;top:4px"></div>
<svg style="left:620.5px;top:3px" width="14" height="15" viewBox="0 0 14 15"><path d="M1.300 1.600 H5.400 L7.800 4 V11 H1.300 Z" fill="#f1d0b3" stroke="#8a5a33" stroke-width="1.200" stroke-linejoin="round"/><path d="M5.400 1.600 V4 H7.800 Z" fill="#fdf0e2" stroke="#8a5a33" stroke-width="0.700"/><circle cx="8.200" cy="8.600" r="2.900" fill="#a3b9dc" stroke="#8199c4" stroke-width="0.700"/><path d="M8.600 11.400 Q11.200 11 13 14" fill="none" stroke="#15161c" stroke-width="2" stroke-linecap="round"/></svg>
<div class="n" style="left:617px;width:70px;top:4px">69.00</div>
<div class="dot g" style="left:698px;top:4px"></div>
<div class="cs" style="left:131px;top:0px"></div>
<div class="cs" style="left:251px;top:0px"></div>
<div class="cs" style="left:321px;top:0px"></div>
<div class="cs" style="left:391px;top:0px"></div>
<div class="cs" style="left:482px;top:0px"></div>
<div class="cs" style="left:552px;top:0px"></div>
<div class="cs" style="left:611px;top:0px"></div>
<div class="cs" style="left:691px;top:0px"></div>
</div>
<div class="gr" style="top:184px">
<svg style="left:7px;top:9px" width="7" height="6" viewBox="0 0 7 6"><path d="M6.500 0 L6.500 6 L0 6 Z" fill="#4a4a4a"/></svg>
<div style="left:21px;top:4px">Basingstoke</div>
<svg style="left:117px;top:3px" width="14" height="15" viewBox="0 0 14 15"><path d="M1.300 1.600 H5.400 L7.800 4 V11 H1.300 Z" fill="#f1d0b3" stroke="#8a5a33" stroke-width="1.200" stroke-linejoin="round"/><path d="M5.400 1.600 V4 H7.800 Z" fill="#fdf0e2" stroke="#8a5a33" stroke-width="0.700"/><circle cx="8.200" cy="8.600" r="2.900" fill="#a3b9dc" stroke="#8199c4" stroke-width="0.700"/><path d="M8.600 11.400 Q11.200 11 13 14" fill="none" stroke="#15161c" stroke-width="2" stroke-linecap="round"/></svg>
<div style="left:137px;top:4px">04/17/2011 03:24 PM</div>
<div class="n" style="left:248px;width:70px;top:4px">11036.00</div>
<div class="n" style="left:318px;width:70px;top:4px">15873.00</div>
<div class="n" style="left:408px;width:70px;top:4px">13325.28</div>
<div class="n" style="left:478px;width:70px;top:4px">8632.02</div>
<div class="dot g" style="left:558px;top:4px"></div>
<div class="dot g" style="left:698px;top:4px"></div>
<div class="cs" style="left:131px;top:0px"></div>
<div class="cs" style="left:251px;top:0px"></div>
<div class="cs" style="left:321px;top:0px"></div>
<div class="cs" style="left:391px;top:0px"></div>
<div class="cs" style="left:482px;top:0px"></div>
<div class="cs" style="left:552px;top:0px"></div>
<div class="cs" style="left:611px;top:0px"></div>
<div class="cs" style="left:691px;top:0px"></div>
</div>
<div class="gr alt" style="top:207px">
<div style="left:39px;top:4px">Tank 1</div>
<svg style="left:117px;top:3px" width="14" height="15" viewBox="0 0 14 15"><path d="M1.300 1.600 H5.400 L7.800 4 V11 H1.300 Z" fill="#f1d0b3" stroke="#8a5a33" stroke-width="1.200" stroke-linejoin="round"/><path d="M5.400 1.600 V4 H7.800 Z" fill="#fdf0e2" stroke="#8a5a33" stroke-width="0.700"/><circle cx="8.200" cy="8.600" r="2.900" fill="#a3b9dc" stroke="#8199c4" stroke-width="0.700"/><path d="M8.600 11.400 Q11.200 11 13 14" fill="none" stroke="#15161c" stroke-width="2" stroke-linecap="round"/></svg>
<div style="left:137px;top:4px">04/17/2011 03:24 PM</div>
<div class="n" style="left:248px;width:70px;top:4px">1651.00</div>
<div class="n" style="left:318px;width:70px;top:4px">3036.00</div>
<div class="n" style="left:408px;width:70px;top:4px">1839.00</div>
<div class="n" style="left:478px;width:70px;top:4px">512.98</div>
<div class="dot g" style="left:558px;top:4px"></div>
<svg style="left:620.5px;top:3px" width="14" height="15" viewBox="0 0 14 15"><path d="M1.300 1.600 H5.400 L7.800 4 V11 H1.300 Z" fill="#f1d0b3" stroke="#8a5a33" stroke-width="1.200" stroke-linejoin="round"/><path d="M5.400 1.600 V4 H7.800 Z" fill="#fdf0e2" stroke="#8a5a33" stroke-width="0.700"/><circle cx="8.200" cy="8.600" r="2.900" fill="#a3b9dc" stroke="#8199c4" stroke-width="0.700"/><path d="M8.600 11.400 Q11.200 11 13 14" fill="none" stroke="#15161c" stroke-width="2" stroke-linecap="round"/></svg>
<div class="n" style="left:617px;width:70px;top:4px">58.98</div>
<div class="dot g" style="left:698px;top:4px"></div>
<div class="cs" style="left:131px;top:0px"></div>
<div class="cs" style="left:251px;top:0px"></div>
<div class="cs" style="left:321px;top:0px"></div>
<div class="cs" style="left:391px;top:0px"></div>
<div class="cs" style="left:482px;top:0px"></div>
<div class="cs" style="left:552px;top:0px"></div>
<div class="cs" style="left:611px;top:0px"></div>
<div class="cs" style="left:691px;top:0px"></div>
</div>
<div class="gr" style="top:230px">
<div style="left:39px;top:4px">Tank 2</div>
<svg style="left:117px;top:3px" width="14" height="15" viewBox="0 0 14 15"><path d="M1.300 1.600 H5.400 L7.800 4 V11 H1.300 Z" fill="#f1d0b3" stroke="#8a5a33" stroke-width="1.200" stroke-linejoin="round"/><path d="M5.400 1.600 V4 H7.800 Z" fill="#fdf0e2" stroke="#8a5a33" stroke-width="0.700"/><circle cx="8.200" cy="8.600" r="2.900" fill="#a3b9dc" stroke="#8199c4" stroke-width="0.700"/><path d="M8.600 11.400 Q11.200 11 13 14" fill="none" stroke="#15161c" stroke-width="2" stroke-linecap="round"/></svg>
<div style="left:137px;top:4px">04/17/2011 03:24 PM</div>
<div class="n" style="left:248px;width:70px;top:4px">2523.00</div>
<div class="n" style="left:318px;width:70px;top:4px">2993.00</div>
<div class="n" style="left:408px;width:70px;top:4px">1552.85</div>
<div class="n" style="left:478px;width:70px;top:4px">1069.04</div>
<div class="dot g" style="left:558px;top:4px"></div>
<svg style="left:620.5px;top:3px" width="14" height="15" viewBox="0 0 14 15"><path d="M1.300 1.600 H5.400 L7.800 4 V11 H1.300 Z" fill="#f1d0b3" stroke="#8a5a33" stroke-width="1.200" stroke-linejoin="round"/><path d="M5.400 1.600 V4 H7.800 Z" fill="#fdf0e2" stroke="#8a5a33" stroke-width="0.700"/><circle cx="8.200" cy="8.600" r="2.900" fill="#a3b9dc" stroke="#8199c4" stroke-width="0.700"/><path d="M8.600 11.400 Q11.200 11 13 14" fill="none" stroke="#15161c" stroke-width="2" stroke-linecap="round"/></svg>
<div class="n" style="left:617px;width:70px;top:4px">-13.81</div>
<div class="dot g" style="left:698px;top:4px"></div>
<div class="cs" style="left:131px;top:0px"></div>
<div class="cs" style="left:251px;top:0px"></div>
<div class="cs" style="left:321px;top:0px"></div>
<div class="cs" style="left:391px;top:0px"></div>
<div class="cs" style="left:482px;top:0px"></div>
<div class="cs" style="left:552px;top:0px"></div>
<div class="cs" style="left:611px;top:0px"></div>
<div class="cs" style="left:691px;top:0px"></div>
</div>
<div class="gr alt" style="top:253px">
<div style="left:39px;top:4px">Tank 3</div>
<svg style="left:117px;top:3px" width="14" height="15" viewBox="0 0 14 15"><path d="M1.300 1.600 H5.400 L7.800 4 V11 H1.300 Z" fill="#f1d0b3" stroke="#8a5a33" stroke-width="1.200" stroke-linejoin="round"/><path d="M5.400 1.600 V4 H7.800 Z" fill="#fdf0e2" stroke="#8a5a33" stroke-width="0.700"/><circle cx="8.200" cy="8.600" r="2.900" fill="#a3b9dc" stroke="#8199c4" stroke-width="0.700"/><path d="M8.600 11.400 Q11.200 11 13 14" fill="none" stroke="#15161c" stroke-width="2" stroke-linecap="round"/></svg>
<div style="left:137px;top:4px">04/17/2011 03:24 PM</div>
<div class="n" style="left:248px;width:70px;top:4px">4097.00</div>
<div class="n" style="left:318px;width:70px;top:4px">5349.00</div>
<div class="n" style="left:408px;width:70px;top:4px">4652.77</div>
<div class="n" style="left:478px;width:70px;top:4px">3450.00</div>
<div class="dot g" style="left:558px;top:4px"></div>
<svg style="left:620.5px;top:3px" width="14" height="15" viewBox="0 0 14 15"><path d="M1.300 1.600 H5.400 L7.800 4 V11 H1.300 Z" fill="#f1d0b3" stroke="#8a5a33" stroke-width="1.200" stroke-linejoin="round"/><path d="M5.400 1.600 V4 H7.800 Z" fill="#fdf0e2" stroke="#8a5a33" stroke-width="0.700"/><circle cx="8.200" cy="8.600" r="2.900" fill="#a3b9dc" stroke="#8199c4" stroke-width="0.700"/><path d="M8.600 11.400 Q11.200 11 13 14" fill="none" stroke="#15161c" stroke-width="2" stroke-linecap="round"/></svg>
<div class="n" style="left:617px;width:70px;top:4px">49.23</div>
<div class="dot g" style="left:698px;top:4px"></div>
<div class="cs" style="left:131px;top:0px"></div>
<div class="cs" style="left:251px;top:0px"></div>
<div class="cs" style="left:321px;top:0px"></div>
<div class="cs" style="left:391px;top:0px"></div>
<div class="cs" style="left:482px;top:0px"></div>
<div class="cs" style="left:552px;top:0px"></div>
<div class="cs" style="left:611px;top:0px"></div>
<div class="cs" style="left:691px;top:0px"></div>
</div>
<div class="gr" style="top:276px">
<div style="left:39px;top:4px">Tank 4</div>
<svg style="left:117px;top:3px" width="14" height="15" viewBox="0 0 14 15"><path d="M1.300 1.600 H5.400 L7.800 4 V11 H1.300 Z" fill="#f1d0b3" stroke="#8a5a33" stroke-width="1.200" stroke-linejoin="round"/><path d="M5.400 1.600 V4 H7.800 Z" fill="#fdf0e2" stroke="#8a5a33" stroke-width="0.700"/><circle cx="8.200" cy="8.600" r="2.900" fill="#a3b9dc" stroke="#8199c4" stroke-width="0.700"/><path d="M8.600 11.400 Q11.200 11 13 14" fill="none" stroke="#15161c" stroke-width="2" stroke-linecap="round"/></svg>
<div style="left:137px;top:4px">04/17/2011 03:24 PM</div>
<div class="n" style="left:248px;width:70px;top:4px">2765.00</div>
<div class="n" style="left:318px;width:70px;top:4px">4495.00</div>
<div class="n" style="left:408px;width:70px;top:4px">5280.66</div>
<div class="n" style="left:478px;width:70px;top:4px">3600.00</div>
<div class="dot g" style="left:558px;top:4px"></div>
<svg style="left:620.5px;top:3px" width="14" height="15" viewBox="0 0 14 15"><path d="M1.300 1.600 H5.400 L7.800 4 V11 H1.300 Z" fill="#f1d0b3" stroke="#8a5a33" stroke-width="1.200" stroke-linejoin="round"/><path d="M5.400 1.600 V4 H7.800 Z" fill="#fdf0e2" stroke="#8a5a33" stroke-width="0.700"/><circle cx="8.200" cy="8.600" r="2.900" fill="#a3b9dc" stroke="#8199c4" stroke-width="0.700"/><path d="M8.600 11.400 Q11.200 11 13 14" fill="none" stroke="#15161c" stroke-width="2" stroke-linecap="round"/></svg>
<div class="n" style="left:617px;width:70px;top:4px">49.34</div>
<div class="dot g" style="left:698px;top:4px"></div>
<div class="cs" style="left:131px;top:0px"></div>
<div class="cs" style="left:251px;top:0px"></div>
<div class="cs" style="left:321px;top:0px"></div>
<div class="cs" style="left:391px;top:0px"></div>
<div class="cs" style="left:482px;top:0px"></div>
<div class="cs" style="left:552px;top:0px"></div>
<div class="cs" style="left:611px;top:0px"></div>
<div class="cs" style="left:691px;top:0px"></div>
</div>
<div class="gr alt" style="top:299px">
<svg style="left:7px;top:9px" width="7" height="6" viewBox="0 0 7 6"><path d="M6.500 0 L6.500 6 L0 6 Z" fill="#4a4a4a"/></svg>
<div style="left:21px;top:4px">Charlotte</div>
<svg style="left:117px;top:3px" width="14" height="15" viewBox="0 0 14 15"><path d="M1.300 1.600 H5.400 L7.800 4 V11 H1.300 Z" fill="#f1d0b3" stroke="#8a5a33" stroke-width="1.200" stroke-linejoin="round"/><path d="M5.400 1.600 V4 H7.800 Z" fill="#fdf0e2" stroke="#8a5a33" stroke-width="0.700"/><circle cx="8.200" cy="8.600" r="2.900" fill="#a3b9dc" stroke="#8199c4" stroke-width="0.700"/><path d="M8.600 11.400 Q11.200 11 13 14" fill="none" stroke="#15161c" stroke-width="2" stroke-linecap="round"/></svg>
<div style="left:137px;top:4px">04/18/2011 12:04 PM</div>
<div class="n" style="left:248px;width:70px;top:4px">13472.00</div>
<div class="n" style="left:318px;width:70px;top:4px">15964.00</div>
<div class="n" style="left:408px;width:70px;top:4px">8574.62</div>
<div class="n" style="left:478px;width:70px;top:4px">6100.00</div>
<div class="dot g" style="left:558px;top:4px"></div>
<div class="dot g" style="left:698px;top:4px"></div>
<div class="cs" style="left:131px;top:0px"></div>
<div class="cs" style="left:251px;top:0px"></div>
<div class="cs" style="left:321px;top:0px"></div>
<div class="cs" style="left:391px;top:0px"></div>
<div class="cs" style="left:482px;top:0px"></div>
<div class="cs" style="left:552px;top:0px"></div>
<div class="cs" style="left:611px;top:0px"></div>
<div class="cs" style="left:691px;top:0px"></div>
</div>
<div class="gr" style="top:322px">
<div style="left:39px;top:4px">Tank 1</div>
<svg style="left:117px;top:3px" width="14" height="15" viewBox="0 0 14 15"><path d="M1.300 1.600 H5.400 L7.800 4 V11 H1.300 Z" fill="#f1d0b3" stroke="#8a5a33" stroke-width="1.200" stroke-linejoin="round"/><path d="M5.400 1.600 V4 H7.800 Z" fill="#fdf0e2" stroke="#8a5a33" stroke-width="0.700"/><circle cx="8.200" cy="8.600" r="2.900" fill="#a3b9dc" stroke="#8199c4" stroke-width="0.700"/><path d="M8.600 11.400 Q11.200 11 13 14" fill="none" stroke="#15161c" stroke-width="2" stroke-linecap="round"/></svg>
<div style="left:137px;top:4px">04/18/2011 12:04 PM</div>
<div class="n" style="left:248px;width:70px;top:4px">4425.00</div>
<div class="n" style="left:318px;width:70px;top:4px">5786.00</div>
<div class="n" style="left:408px;width:70px;top:4px">3542.64</div>
<div class="n" style="left:478px;width:70px;top:4px">2200.00</div>
<div class="dot g" style="left:558px;top:4px"></div>
<svg style="left:620.5px;top:3px" width="14" height="15" viewBox="0 0 14 15"><path d="M1.300 1.600 H5.400 L7.800 4 V11 H1.300 Z" fill="#f1d0b3" stroke="#8a5a33" stroke-width="1.200" stroke-linejoin="round"/><path d="M5.400 1.600 V4 H7.800 Z" fill="#fdf0e2" stroke="#8a5a33" stroke-width="0.700"/><circle cx="8.200" cy="8.600" r="2.900" fill="#a3b9dc" stroke="#8199c4" stroke-width="0.700"/><path d="M8.600 11.400 Q11.200 11 13 14" fill="none" stroke="#15161c" stroke-width="2" stroke-linecap="round"/></svg>
<div class="n" style="left:617px;width:70px;top:4px">18.36</div>
<div class="dot g" style="left:698px;top:4px"></div>
<div class="cs" style="left:131px;top:0px"></div>
<div class="cs" style="left:251px;top:0px"></div>
<div class="cs" style="left:321px;top:0px"></div>
<div class="cs" style="left:391px;top:0px"></div>
<div class="cs" style="left:482px;top:0px"></div>
<div class="cs" style="left:552px;top:0px"></div>
<div class="cs" style="left:611px;top:0px"></div>
<div class="cs" style="left:691px;top:0px"></div>
</div>
<div class="gr alt" style="top:345px">
<div style="left:39px;top:4px">Tank 2</div>
<svg style="left:117px;top:3px" width="14" height="15" viewBox="0 0 14 15"><path d="M1.300 1.600 H5.400 L7.800 4 V11 H1.300 Z" fill="#f1d0b3" stroke="#8a5a33" stroke-width="1.200" stroke-linejoin="round"/><path d="M5.400 1.600 V4 H7.800 Z" fill="#fdf0e2" stroke="#8a5a33" stroke-width="0.700"/><circle cx="8.200" cy="8.600" r="2.900" fill="#a3b9dc" stroke="#8199c4" stroke-width="0.700"/><path d="M8.600 11.400 Q11.200 11 13 14" fill="none" stroke="#15161c" stroke-width="2" stroke-linecap="round"/></svg>
<div style="left:137px;top:4px">04/18/2011 12:04 PM</div>
<div class="n" style="left:248px;width:70px;top:4px">2640.00</div>
<div class="n" style="left:318px;width:70px;top:4px">2333.00</div>
<div class="n" style="left:408px;width:70px;top:4px">999.00</div>
<div class="n" style="left:478px;width:70px;top:4px">1300.00</div>
<div class="dot g" style="left:558px;top:4px"></div>
<svg style="left:620.5px;top:3px" width="14" height="15" viewBox="0 0 14 15"><path d="M1.300 1.600 H5.400 L7.800 4 V11 H1.300 Z" fill="#f1d0b3" stroke="#8a5a33" stroke-width="1.200" stroke-linejoin="round"/><path d="M5.400 1.600 V4 H7.800 Z" fill="#fdf0e2" stroke="#8a5a33" stroke-width="0.700"/><circle cx="8.200" cy="8.600" r="2.900" fill="#a3b9dc" stroke="#8199c4" stroke-width="0.700"/><path d="M8.600 11.400 Q11.200 11 13 14" fill="none" stroke="#15161c" stroke-width="2" stroke-linecap="round"/></svg>
<div class="n" style="left:617px;width:70px;top:4px">-6.00</div>
<div class="dot g" style="left:698px;top:4px"></div>
<div class="cs" style="left:131px;top:0px"></div>
<div class="cs" style="left:251px;top:0px"></div>
<div class="cs" style="left:321px;top:0px"></div>
<div class="cs" style="left:391px;top:0px"></div>
<div class="cs" style="left:482px;top:0px"></div>
<div class="cs" style="left:552px;top:0px"></div>
<div class="cs" style="left:611px;top:0px"></div>
<div class="cs" style="left:691px;top:0px"></div>
</div>
<div class="gr" style="top:368px">
<div style="left:39px;top:4px">Tank 3</div>
<svg style="left:117px;top:3px" width="14" height="15" viewBox="0 0 14 15"><path d="M1.300 1.600 H5.400 L7.800 4 V11 H1.300 Z" fill="#f1d0b3" stroke="#8a5a33" stroke-width="1.200" stroke-linejoin="round"/><path d="M5.400 1.600 V4 H7.800 Z" fill="#fdf0e2" stroke="#8a5a33" stroke-width="0.700"/><circle cx="8.200" cy="8.600" r="2.900" fill="#a3b9dc" stroke="#8199c4" stroke-width="0.700"/><path d="M8.600 11.400 Q11.200 11 13 14" fill="none" stroke="#15161c" stroke-width="2" stroke-linecap="round"/></svg>
<div style="left:137px;top:4px">04/18/2011 12:04 PM</div>
<div class="n" style="left:248px;width:70px;top:4px">6407.00</div>
<div class="n" style="left:318px;width:70px;top:4px">7845.00</div>
<div class="n" style="left:408px;width:70px;top:4px">4032.98</div>
<div class="n" style="left:478px;width:70px;top:4px">2600.00</div>
<div class="dot g" style="left:558px;top:4px"></div>
<svg style="left:620.5px;top:3px" width="14" height="15" viewBox="0 0 14 15"><path d="M1.300 1.600 H5.400 L7.800 4 V11 H1.300 Z" fill="#f1d0b3" stroke="#8a5a33" stroke-width="1.200" stroke-linejoin="round"/><path d="M5.400 1.600 V4 H7.800 Z" fill="#fdf0e2" stroke="#8a5a33" stroke-width="0.700"/><circle cx="8.200" cy="8.600" r="2.900" fill="#a3b9dc" stroke="#8199c4" stroke-width="0.700"/><path d="M8.600 11.400 Q11.200 11 13 14" fill="none" stroke="#15161c" stroke-width="2" stroke-linecap="round"/></svg>
<div class="n" style="left:617px;width:70px;top:4px">5.02</div>
<div class="dot g" style="left:698px;top:4px"></div>
<div class="cs" style="left:131px;top:0px"></div>
<div class="cs" style="left:251px;top:0px"></div>
<div class="cs" style="left:321px;top:0px"></div>
<div class="cs" style="left:391px;top:0px"></div>
<div class="cs" style="left:482px;top:0px"></div>
<div class="cs" style="left:552px;top:0px"></div>
<div class="cs" style="left:611px;top:0px"></div>
<div class="cs" style="left:691px;top:0px"></div>
</div>
<div class="gr alt" style="top:391px">
<svg style="left:7px;top:9px" width="7" height="6" viewBox="0 0 7 6"><path d="M6.500 0 L6.500 6 L0 6 Z" fill="#4a4a4a"/></svg>
<div style="left:21px;top:4px">Chicago</div>
<svg style="left:117px;top:3px" width="14" height="15" viewBox="0 0 14 15"><path d="M1.300 1.600 H5.400 L7.800 4 V11 H1.300 Z" fill="#f1d0b3" stroke="#8a5a33" stroke-width="1.200" stroke-linejoin="round"/><path d="M5.400 1.600 V4 H7.800 Z" fill="#fdf0e2" stroke="#8a5a33" stroke-width="0.700"/><circle cx="8.200" cy="8.600" r="2.900" fill="#a3b9dc" stroke="#8199c4" stroke-width="0.700"/><path d="M8.600 11.400 Q11.200 11 13 14" fill="none" stroke="#15161c" stroke-width="2" stroke-linecap="round"/></svg>
<div style="left:137px;top:4px;letter-spacing:0.16px">05/25/2011 09:58 AM</div>
<div class="n" style="left:248px;width:70px;top:4px">4793.00</div>
<div class="n" style="left:318px;width:70px;top:4px">6034.00</div>
<div class="n" style="left:408px;width:70px;top:4px">3504.63</div>
<div class="n" style="left:478px;width:70px;top:4px">2100.00</div>
<div class="dot g" style="left:558px;top:4px"></div>
<div class="dot g" style="left:698px;top:4px"></div>
<div class="cs" style="left:131px;top:0px"></div>
<div class="cs" style="left:251px;top:0px"></div>
<div class="cs" style="left:321px;top:0px"></div>
<div class="cs" style="left:391px;top:0px"></div>
<div class="cs" style="left:482px;top:0px"></div>
<div class="cs" style="left:552px;top:0px"></div>
<div class="cs" style="left:611px;top:0px"></div>
<div class="cs" style="left:691px;top:0px"></div>
</div>
<div class="gr" style="top:414px">
<div style="left:39px;top:4px">Tank 1</div>
<svg style="left:117px;top:3px" width="14" height="15" viewBox="0 0 14 15"><path d="M1.300 1.600 H5.400 L7.800 4 V11 H1.300 Z" fill="#f1d0b3" stroke="#8a5a33" stroke-width="1.200" stroke-linejoin="round"/><path d="M5.400 1.600 V4 H7.800 Z" fill="#fdf0e2" stroke="#8a5a33" stroke-width="0.700"/><circle cx="8.200" cy="8.600" r="2.900" fill="#a3b9dc" stroke="#8199c4" stroke-width="0.700"/><path d="M8.600 11.400 Q11.200 11 13 14" fill="none" stroke="#15161c" stroke-width="2" stroke-linecap="round"/></svg>
<div style="left:137px;top:4px;letter-spacing:0.16px">05/25/2011 09:58 AM</div>
<div class="n" style="left:248px;width:70px;top:4px">200.00</div>
<div class="n" style="left:318px;width:70px;top:4px">100.00</div>
<div class="n" style="left:408px;width:70px;top:4px">200.00</div>
<div class="n" style="left:478px;width:70px;top:4px">100.00</div>
<div class="dot g" style="left:558px;top:4px"></div>
<svg style="left:620.5px;top:3px" width="14" height="15" viewBox="0 0 14 15"><path d="M1.300 1.600 H5.400 L7.800 4 V11 H1.300 Z" fill="#f1d0b3" stroke="#8a5a33" stroke-width="1.200" stroke-linejoin="round"/><path d="M5.400 1.600 V4 H7.800 Z" fill="#fdf0e2" stroke="#8a5a33" stroke-width="0.700"/><circle cx="8.200" cy="8.600" r="2.900" fill="#a3b9dc" stroke="#8199c4" stroke-width="0.700"/><path d="M8.600 11.400 Q11.200 11 13 14" fill="none" stroke="#15161c" stroke-width="2" stroke-linecap="round"/></svg>
<div class="n" style="left:617px;width:70px;top:4px">-46.95</div>
<div class="dot g" style="left:698px;top:4px"></div>
<div class="cs" style="left:131px;top:0px"></div>
<div class="cs" style="left:251px;top:0px"></div>
<div class="cs" style="left:321px;top:0px"></div>
<div class="cs" style="left:391px;top:0px"></div>
<div class="cs" style="left:482px;top:0px"></div>
<div class="cs" style="left:552px;top:0px"></div>
<div class="cs" style="left:611px;top:0px"></div>
<div class="cs" style="left:691px;top:0px"></div>
</div>
<div class="gr alt" style="top:437px">
<div style="left:39px;top:4px">Tank 2</div>
<svg style="left:117px;top:3px" width="14" height="15" viewBox="0 0 14 15"><path d="M1.300 1.600 H5.400 L7.800 4 V11 H1.300 Z" fill="#f1d0b3" stroke="#8a5a33" stroke-width="1.200" stroke-linejoin="round"/><path d="M5.400 1.600 V4 H7.800 Z" fill="#fdf0e2" stroke="#8a5a33" stroke-width="0.700"/><circle cx="8.200" cy="8.600" r="2.900" fill="#a3b9dc" stroke="#8199c4" stroke-width="0.700"/><path d="M8.600 11.400 Q11.200 11 13 14" fill="none" stroke="#15161c" stroke-width="2" stroke-linecap="round"/></svg>
<div style="left:137px;top:4px;letter-spacing:0.16px">04/18/2011 10:53 AM</div>
<div class="n" style="left:248px;width:70px;top:4px">4593.00</div>
<div class="n" style="left:318px;width:70px;top:4px">5934.00</div>
<div class="n" style="left:408px;width:70px;top:4px">3304.63</div>
<div class="n" style="left:478px;width:70px;top:4px">2000.00</div>
<div class="dot g" style="left:558px;top:4px"></div>
<svg style="left:620.5px;top:3px" width="14" height="15" viewBox="0 0 14 15"><path d="M1.300 1.600 H5.400 L7.800 4 V11 H1.300 Z" fill="#f1d0b3" stroke="#8a5a33" stroke-width="1.200" stroke-linejoin="round"/><path d="M5.400 1.600 V4 H7.800 Z" fill="#fdf0e2" stroke="#8a5a33" stroke-width="0.700"/><circle cx="8.200" cy="8.600" r="2.900" fill="#a3b9dc" stroke="#8199c4" stroke-width="0.700"/><path d="M8.600 11.400 Q11.200 11 13 14" fill="none" stroke="#15161c" stroke-width="2" stroke-linecap="round"/></svg>
<div class="n" style="left:617px;width:70px;top:4px">36.37</div>
<div class="dot g" style="left:698px;top:4px"></div>
<div class="cs" style="left:131px;top:0px"></div>
<div class="cs" style="left:251px;top:0px"></div>
<div class="cs" style="left:321px;top:0px"></div>
<div class="cs" style="left:391px;top:0px"></div>
<div class="cs" style="left:482px;top:0px"></div>
<div class="cs" style="left:552px;top:0px"></div>
<div class="cs" style="left:611px;top:0px"></div>
<div class="cs" style="left:691px;top:0px"></div>
</div>
<div class="gr" style="top:460px">
<svg style="left:7px;top:9px" width="7" height="6" viewBox="0 0 7 6"><path d="M6.500 0 L6.500 6 L0 6 Z" fill="#4a4a4a"/></svg>
<div style="left:21px;top:4px">Detroit</div>
<svg style="left:117px;top:3px" width="14" height="15" viewBox="0 0 14 15"><path d="M1.300 1.600 H5.400 L7.800 4 V11 H1.300 Z" fill="#f1d0b3" stroke="#8a5a33" stroke-width="1.200" stroke-linejoin="round"/><path d="M5.400 1.600 V4 H7.800 Z" fill="#fdf0e2" stroke="#8a5a33" stroke-width="0.700"/><circle cx="8.200" cy="8.600" r="2.900" fill="#a3b9dc" stroke="#8199c4" stroke-width="0.700"/><path d="M8.600 11.400 Q11.200 11 13 14" fill="none" stroke="#15161c" stroke-width="2" stroke-linecap="round"/></svg>
<div style="left:137px;top:4px">05/24/2011 11:48 PM</div>
<div class="n" style="left:248px;width:70px;top:4px">23852.00</div>
<div class="n" style="left:318px;width:70px;top:4px">30271.00</div>
<div class="n" style="left:408px;width:70px;top:4px">24081.53</div>
<div class="n" style="left:478px;width:70px;top:4px">17966.52</div>
<div class="dot y" style="left:558px;top:4px"></div>
<div class="dot y" style="left:698px;top:4px"></div>
<div class="cs" style="left:131px;top:0px"></div>
<div class="cs" style="left:251px;top:0px"></div>
<div class="cs" style="left:321px;top:0px"></div>
<div class="cs" style="left:391px;top:0px"></div>
<div class="cs" style="left:482px;top:0px"></div>
<div class="cs" style="left:552px;top:0px"></div>
<div class="cs" style="left:611px;top:0px"></div>
<div class="cs" style="left:691px;top:0px"></div>
</div>
<div class="gr alt" style="top:483px">
<div style="left:39px;top:4px">Tank 1</div>
<svg style="left:117px;top:3px" width="14" height="15" viewBox="0 0 14 15"><path d="M1.300 1.600 H5.400 L7.800 4 V11 H1.300 Z" fill="#f1d0b3" stroke="#8a5a33" stroke-width="1.200" stroke-linejoin="round"/><path d="M5.400 1.600 V4 H7.800 Z" fill="#fdf0e2" stroke="#8a5a33" stroke-width="0.700"/><circle cx="8.200" cy="8.600" r="2.900" fill="#a3b9dc" stroke="#8199c4" stroke-width="0.700"/><path d="M8.600 11.400 Q11.200 11 13 14" fill="none" stroke="#15161c" stroke-width="2" stroke-linecap="round"/></svg>
<div style="left:137px;top:4px">05/24/2011 11:45 PM</div>
<div class="n" style="left:248px;width:70px;top:4px">7375.00</div>
<div class="n" style="left:318px;width:70px;top:4px">10340.00</div>
<div class="n" style="left:408px;width:70px;top:4px">7272.63</div>
<div class="n" style="left:478px;width:70px;top:4px">4466.52</div>
<div class="dot y" style="left:558px;top:4px"></div>
<svg style="left:620.5px;top:3px" width="14" height="15" viewBox="0 0 14 15"><path d="M1.300 1.600 H5.400 L7.800 4 V11 H1.300 Z" fill="#f1d0b3" stroke="#8a5a33" stroke-width="1.200" stroke-linejoin="round"/><path d="M5.400 1.600 V4 H7.800 Z" fill="#fdf0e2" stroke="#8a5a33" stroke-width="0.700"/><circle cx="8.200" cy="8.600" r="2.900" fill="#a3b9dc" stroke="#8199c4" stroke-width="0.700"/><path d="M8.600 11.400 Q11.200 11 13 14" fill="none" stroke="#15161c" stroke-width="2" stroke-linecap="round"/></svg>
<div class="n" style="left:617px;width:70px;top:4px">158.89</div>
<div class="dot y" style="left:698px;top:4px"></div>
<div class="cs" style="left:131px;top:0px"></div>
<div class="cs" style="left:251px;top:0px"></div>
<div class="cs" style="left:321px;top:0px"></div>
<div class="cs" style="left:391px;top:0px"></div>
<div class="cs" style="left:482px;top:0px"></div>
<div class="cs" style="left:552px;top:0px"></div>
<div class="cs" style="left:611px;top:0px"></div>
<div class="cs" style="left:691px;top:0px"></div>
</div>
<div class="gr" style="top:506px">
<div style="left:39px;top:4px">Tank 2</div>
<svg style="left:117px;top:3px" width="14" height="15" viewBox="0 0 14 15"><path d="M1.300 1.600 H5.400 L7.800 4 V11 H1.300 Z" fill="#f1d0b3" stroke="#8a5a33" stroke-width="1.200" stroke-linejoin="round"/><path d="M5.400 1.600 V4 H7.800 Z" fill="#fdf0e2" stroke="#8a5a33" stroke-width="0.700"/><circle cx="8.200" cy="8.600" r="2.900" fill="#a3b9dc" stroke="#8199c4" stroke-width="0.700"/><path d="M8.600 11.400 Q11.200 11 13 14" fill="none" stroke="#15161c" stroke-width="2" stroke-linecap="round"/></svg>
<div style="left:137px;top:4px">05/24/2011 11:46 PM</div>
<div class="n" style="left:248px;width:70px;top:4px">6139.00</div>
<div class="n" style="left:318px;width:70px;top:4px">6747.00</div>
<div class="n" style="left:408px;width:70px;top:4px">6377.22</div>
<div class="n" style="left:478px;width:70px;top:4px">5700.00</div>
<div class="dot g" style="left:558px;top:4px"></div>
<svg style="left:620.5px;top:3px" width="14" height="15" viewBox="0 0 14 15"><path d="M1.300 1.600 H5.400 L7.800 4 V11 H1.300 Z" fill="#f1d0b3" stroke="#8a5a33" stroke-width="1.200" stroke-linejoin="round"/><path d="M5.400 1.600 V4 H7.800 Z" fill="#fdf0e2" stroke="#8a5a33" stroke-width="0.700"/><circle cx="8.200" cy="8.600" r="2.900" fill="#a3b9dc" stroke="#8199c4" stroke-width="0.700"/><path d="M8.600 11.400 Q11.200 11 13 14" fill="none" stroke="#15161c" stroke-width="2" stroke-linecap="round"/></svg>
<div class="n" style="left:617px;width:70px;top:4px">-69.22</div>
<div class="dot g" style="left:698px;top:4px"></div>
<div class="cs" style="left:131px;top:0px"></div>
<div class="cs" style="left:251px;top:0px"></div>
<div class="cs" style="left:321px;top:0px"></div>
<div class="cs" style="left:391px;top:0px"></div>
<div class="cs" style="left:482px;top:0px"></div>
<div class="cs" style="left:552px;top:0px"></div>
<div class="cs" style="left:611px;top:0px"></div>
<div class="cs" style="left:691px;top:0px"></div>
</div>
<div class="gr alt" style="top:529px">
<div style="left:39px;top:4px">Tank 3</div>
<svg style="left:117px;top:3px" width="14" height="15" viewBox="0 0 14 15"><path d="M1.300 1.600 H5.400 L7.800 4 V11 H1.300 Z" fill="#f1d0b3" stroke="#8a5a33" stroke-width="1.200" stroke-linejoin="round"/><path d="M5.400 1.600 V4 H7.800 Z" fill="#fdf0e2" stroke="#8a5a33" stroke-width="0.700"/><circle cx="8.200" cy="8.600" r="2.900" fill="#a3b9dc" stroke="#8199c4" stroke-width="0.700"/><path d="M8.600 11.400 Q11.200 11 13 14" fill="none" stroke="#15161c" stroke-width="2" stroke-linecap="round"/></svg>
<div style="left:137px;top:4px">05/24/2011 11:47 PM</div>
<div class="n" style="left:248px;width:70px;top:4px">4954.00</div>
<div class="n" style="left:318px;width:70px;top:4px">5638.00</div>
<div class="n" style="left:408px;width:70px;top:4px">6475.65</div>
<div class="n" style="left:478px;width:70px;top:4px">5800.00</div>
<div class="dot g" style="left:558px;top:4px"></div>
<svg style="left:620.5px;top:3px" width="14" height="15" viewBox="0 0 14 15"><path d="M1.300 1.600 H5.400 L7.800 4 V11 H1.300 Z" fill="#f1d0b3" stroke="#8a5a33" stroke-width="1.200" stroke-linejoin="round"/><path d="M5.400 1.600 V4 H7.800 Z" fill="#fdf0e2" stroke="#8a5a33" stroke-width="0.700"/><circle cx="8.200" cy="8.600" r="2.900" fill="#a3b9dc" stroke="#8199c4" stroke-width="0.700"/><path d="M8.600 11.400 Q11.200 11 13 14" fill="none" stroke="#15161c" stroke-width="2" stroke-linecap="round"/></svg>
<div class="n" style="left:617px;width:70px;top:4px">8.35</div>
<div class="dot g" style="left:698px;top:4px"></div>
<div class="cs" style="left:131px;top:0px"></div>
<div class="cs" style="left:251px;top:0px"></div>
<div class="cs" style="left:321px;top:0px"></div>
<div class="cs" style="left:391px;top:0px"></div>
<div class="cs" style="left:482px;top:0px"></div>
<div class="cs" style="left:552px;top:0px"></div>
<div class="cs" style="left:611px;top:0px"></div>
<div class="cs" style="left:691px;top:0px"></div>
</div>
<div class="gr" style="top:552px">
<div style="left:39px;top:4px">Tank 4</div>
<svg style="left:117px;top:3px" width="14" height="15" viewBox="0 0 14 15"><path d="M1.300 1.600 H5.400 L7.800 4 V11 H1.300 Z" fill="#f1d0b3" stroke="#8a5a33" stroke-width="1.200" stroke-linejoin="round"/><path d="M5.400 1.600 V4 H7.800 Z" fill="#fdf0e2" stroke="#8a5a33" stroke-width="0.700"/><circle cx="8.200" cy="8.600" r="2.900" fill="#a3b9dc" stroke="#8199c4" stroke-width="0.700"/><path d="M8.600 11.400 Q11.200 11 13 14" fill="none" stroke="#15161c" stroke-width="2" stroke-linecap="round"/></svg>
<div style="left:137px;top:4px">05/24/2011 11:48 PM</div>
<div class="n" style="left:248px;width:70px;top:4px">5384.00</div>
<div class="n" style="left:318px;width:70px;top:4px">7546.00</div>
<div class="n" style="left:408px;width:70px;top:4px">3956.03</div>
<div class="n" style="left:478px;width:70px;top:4px">2000.00</div>
<div class="dot y" style="left:558px;top:4px"></div>
<svg style="left:620.5px;top:3px" width="14" height="15" viewBox="0 0 14 15"><path d="M1.300 1.600 H5.400 L7.800 4 V11 H1.300 Z" fill="#f1d0b3" stroke="#8a5a33" stroke-width="1.200" stroke-linejoin="round"/><path d="M5.400 1.600 V4 H7.800 Z" fill="#fdf0e2" stroke="#8a5a33" stroke-width="0.700"/><circle cx="8.200" cy="8.600" r="2.900" fill="#a3b9dc" stroke="#8199c4" stroke-width="0.700"/><path d="M8.600 11.400 Q11.200 11 13 14" fill="none" stroke="#15161c" stroke-width="2" stroke-linecap="round"/></svg>
<div class="n" style="left:617px;width:70px;top:4px">205.97</div>
<div class="dot g" style="left:698px;top:4px"></div>
<div class="cs" style="left:131px;top:0px"></div>
<div class="cs" style="left:251px;top:0px"></div>
<div class="cs" style="left:321px;top:0px"></div>
<div class="cs" style="left:391px;top:0px"></div>
<div class="cs" style="left:482px;top:0px"></div>
<div class="cs" style="left:552px;top:0px"></div>
<div class="cs" style="left:611px;top:0px"></div>
<div class="cs" style="left:691px;top:0px"></div>
</div>
<div class="gr alt" style="top:575px">
<svg style="left:7px;top:9px" width="7" height="6" viewBox="0 0 7 6"><path d="M6.500 0 L6.500 6 L0 6 Z" fill="#4a4a4a"/></svg>
<div style="left:21px;top:4px">East Rutherford</div>
<svg style="left:117px;top:3px" width="14" height="15" viewBox="0 0 14 15"><path d="M1.300 1.600 H5.400 L7.800 4 V11 H1.300 Z" fill="#f1d0b3" stroke="#8a5a33" stroke-width="1.200" stroke-linejoin="round"/><path d="M5.400 1.600 V4 H7.800 Z" fill="#fdf0e2" stroke="#8a5a33" stroke-width="0.700"/><circle cx="8.200" cy="8.600" r="2.900" fill="#a3b9dc" stroke="#8199c4" stroke-width="0.700"/><path d="M8.600 11.400 Q11.200 11 13 14" fill="none" stroke="#15161c" stroke-width="2" stroke-linecap="round"/></svg>
<div style="left:137px;top:4px;letter-spacing:0.16px">04/18/2011 11:16 AM</div>
<div class="n" style="left:248px;width:70px;top:4px">19618.00</div>
<div class="n" style="left:318px;width:70px;top:4px">20473.00</div>
<div class="n" style="left:408px;width:70px;top:4px">12500.66</div>
<div class="n" style="left:478px;width:70px;top:4px">11900.00</div>
<div class="dot y" style="left:558px;top:4px"></div>
<div class="dot g" style="left:698px;top:4px"></div>
<div class="cs" style="left:131px;top:0px"></div>
<div class="cs" style="left:251px;top:0px"></div>
<div class="cs" style="left:321px;top:0px"></div>
<div class="cs" style="left:391px;top:0px"></div>
<div class="cs" style="left:482px;top:0px"></div>
<div class="cs" style="left:552px;top:0px"></div>
<div class="cs" style="left:611px;top:0px"></div>
<div class="cs" style="left:691px;top:0px"></div>
</div>
<div class="gr" style="top:598px">
<div style="left:39px;top:4px">Tank 1</div>
<svg style="left:117px;top:3px" width="14" height="15" viewBox="0 0 14 15"><path d="M1.300 1.600 H5.400 L7.800 4 V11 H1.300 Z" fill="#f1d0b3" stroke="#8a5a33" stroke-width="1.200" stroke-linejoin="round"/><path d="M5.400 1.600 V4 H7.800 Z" fill="#fdf0e2" stroke="#8a5a33" stroke-width="0.700"/><circle cx="8.200" cy="8.600" r="2.900" fill="#a3b9dc" stroke="#8199c4" stroke-width="0.700"/><path d="M8.600 11.400 Q11.200 11 13 14" fill="none" stroke="#15161c" stroke-width="2" stroke-linecap="round"/></svg>
<div style="left:137px;top:4px;letter-spacing:0.16px">04/18/2011 11:16 AM</div>
<div class="n" style="left:248px;width:70px;top:4px">4454.00</div>
<div class="n" style="left:318px;width:70px;top:4px">5300.00</div>
<div class="n" style="left:408px;width:70px;top:4px">3662.44</div>
<div class="n" style="left:478px;width:70px;top:4px">2900.00</div>
<div class="dot g" style="left:558px;top:4px"></div>
<svg style="left:620.5px;top:3px" width="14" height="15" viewBox="0 0 14 15"><path d="M1.300 1.600 H5.400 L7.800 4 V11 H1.300 Z" fill="#f1d0b3" stroke="#8a5a33" stroke-width="1.200" stroke-linejoin="round"/><path d="M5.400 1.600 V4 H7.800 Z" fill="#fdf0e2" stroke="#8a5a33" stroke-width="0.700"/><circle cx="8.200" cy="8.600" r="2.900" fill="#a3b9dc" stroke="#8199c4" stroke-width="0.700"/><path d="M8.600 11.400 Q11.200 11 13 14" fill="none" stroke="#15161c" stroke-width="2" stroke-linecap="round"/></svg>
<div class="n" style="left:617px;width:70px;top:4px">83.56</div>
<div class="dot g" style="left:698px;top:4px"></div>
<div class="cs" style="left:131px;top:0px"></div>
<div class="cs" style="left:251px;top:0px"></div>
<div class="cs" style="left:321px;top:0px"></div>
<div class="cs" style="left:391px;top:0px"></div>
<div class="cs" style="left:482px;top:0px"></div>
<div class="cs" style="left:552px;top:0px"></div>
<div class="cs" style="left:611px;top:0px"></div>
<div class="cs" style="left:691px;top:0px"></div>
</div>
<div class="gr alt" style="top:621px">
<div style="left:39px;top:4px">Tank 2</div>
<svg style="left:117px;top:3px" width="14" height="15" viewBox="0 0 14 15"><path d="M1.300 1.600 H5.400 L7.800 4 V11 H1.300 Z" fill="#f1d0b3" stroke="#8a5a33" stroke-width="1.200" stroke-linejoin="round"/><path d="M5.400 1.600 V4 H7.800 Z" fill="#fdf0e2" stroke="#8a5a33" stroke-width="0.700"/><circle cx="8.200" cy="8.600" r="2.900" fill="#a3b9dc" stroke="#8199c4" stroke-width="0.700"/><path d="M8.600 11.400 Q11.200 11 13 14" fill="none" stroke="#15161c" stroke-width="2" stroke-linecap="round"/></svg>
<div style="left:137px;top:4px;letter-spacing:0.16px">04/18/2011 11:16 AM</div>
<div class="n" style="left:248px;width:70px;top:4px">2035.00</div>
<div class="n" style="left:318px;width:70px;top:4px">2741.00</div>
<div class="n" style="left:408px;width:70px;top:4px">1014.92</div>
<div class="n" style="left:478px;width:70px;top:4px">300.00</div>
<div class="dot g" style="left:558px;top:4px"></div>
<svg style="left:620.5px;top:3px" width="14" height="15" viewBox="0 0 14 15"><path d="M1.300 1.600 H5.400 L7.800 4 V11 H1.300 Z" fill="#f1d0b3" stroke="#8a5a33" stroke-width="1.200" stroke-linejoin="round"/><path d="M5.400 1.600 V4 H7.800 Z" fill="#fdf0e2" stroke="#8a5a33" stroke-width="0.700"/><circle cx="8.200" cy="8.600" r="2.900" fill="#a3b9dc" stroke="#8199c4" stroke-width="0.700"/><path d="M8.600 11.400 Q11.200 11 13 14" fill="none" stroke="#15161c" stroke-width="2" stroke-linecap="round"/></svg>
<div class="n" style="left:617px;width:70px;top:4px">-8.92</div>
<div class="dot g" style="left:698px;top:4px"></div>
<div class="cs" style="left:131px;top:0px"></div>
<div class="cs" style="left:251px;top:0px"></div>
<div class="cs" style="left:321px;top:0px"></div>
<div class="cs" style="left:391px;top:0px"></div>
<div class="cs" style="left:482px;top:0px"></div>
<div class="cs" style="left:552px;top:0px"></div>
<div class="cs" style="left:611px;top:0px"></div>
<div class="cs" style="left:691px;top:0px"></div>
</div>
<div class="gr" style="top:644px">
<div style="left:39px;top:4px">Tank 3</div>
<svg style="left:117px;top:3px" width="14" height="15" viewBox="0 0 14 15"><path d="M1.300 1.600 H5.400 L7.800 4 V11 H1.300 Z" fill="#f1d0b3" stroke="#8a5a33" stroke-width="1.200" stroke-linejoin="round"/><path d="M5.400 1.600 V4 H7.800 Z" fill="#fdf0e2" stroke="#8a5a33" stroke-width="0.700"/><circle cx="8.200" cy="8.600" r="2.900" fill="#a3b9dc" stroke="#8199c4" stroke-width="0.700"/><path d="M8.600 11.400 Q11.200 11 13 14" fill="none" stroke="#15161c" stroke-width="2" stroke-linecap="round"/></svg>
<div style="left:137px;top:4px;letter-spacing:0.16px">04/18/2011 11:16 AM</div>
<div class="n" style="left:248px;width:70px;top:4px">8249.00</div>
<div class="n" style="left:318px;width:70px;top:4px">6794.00</div>
<div class="n" style="left:408px;width:70px;top:4px">999.00</div>
<div class="n" style="left:478px;width:70px;top:4px">2600.00</div>
<div class="dot y" style="left:558px;top:4px"></div>
<svg style="left:620.5px;top:3px" width="14" height="15" viewBox="0 0 14 15"><path d="M1.300 1.600 H5.400 L7.800 4 V11 H1.300 Z" fill="#f1d0b3" stroke="#8a5a33" stroke-width="1.200" stroke-linejoin="round"/><path d="M5.400 1.600 V4 H7.800 Z" fill="#fdf0e2" stroke="#8a5a33" stroke-width="0.700"/><circle cx="8.200" cy="8.600" r="2.900" fill="#a3b9dc" stroke="#8199c4" stroke-width="0.700"/><path d="M8.600 11.400 Q11.200 11 13 14" fill="none" stroke="#15161c" stroke-width="2" stroke-linecap="round"/></svg>
<div class="n" style="left:617px;width:70px;top:4px">146.00</div>
<div class="dot g" style="left:698px;top:4px"></div>
<div class="cs" style="left:131px;top:0px"></div>
<div class="cs" style="left:251px;top:0px"></div>
<div class="cs" style="left:321px;top:0px"></div>
<div class="cs" style="left:391px;top:0px"></div>
<div class="cs" style="left:482px;top:0px"></div>
<div class="cs" style="left:552px;top:0px"></div>
<div class="cs" style="left:611px;top:0px"></div>
<div class="cs" style="left:691px;top:0px"></div>
</div>
<div class="gr alt" style="top:667px">
<div style="left:39px;top:4px">Tank 4</div>
<svg style="left:117px;top:3px" width="14" height="15" viewBox="0 0 14 15"><path d="M1.300 1.600 H5.400 L7.800 4 V11 H1.300 Z" fill="#f1d0b3" stroke="#8a5a33" stroke-width="1.200" stroke-linejoin="round"/><path d="M5.400 1.600 V4 H7.800 Z" fill="#fdf0e2" stroke="#8a5a33" stroke-width="0.700"/><circle cx="8.200" cy="8.600" r="2.900" fill="#a3b9dc" stroke="#8199c4" stroke-width="0.700"/><path d="M8.600 11.400 Q11.200 11 13 14" fill="none" stroke="#15161c" stroke-width="2" stroke-linecap="round"/></svg>
<div style="left:137px;top:4px;letter-spacing:0.16px">04/18/2011 11:16 AM</div>
<div class="n" style="left:248px;width:70px;top:4px">4880.00</div>
<div class="n" style="left:318px;width:70px;top:4px">5638.00</div>
<div class="n" style="left:408px;width:70px;top:4px">6824.30</div>
<div class="n" style="left:478px;width:70px;top:4px">6100.00</div>
<div class="dot g" style="left:558px;top:4px"></div>
<svg style="left:620.5px;top:3px" width="14" height="15" viewBox="0 0 14 15"><path d="M1.300 1.600 H5.400 L7.800 4 V11 H1.300 Z" fill="#f1d0b3" stroke="#8a5a33" stroke-width="1.200" stroke-linejoin="round"/><path d="M5.400 1.600 V4 H7.800 Z" fill="#fdf0e2" stroke="#8a5a33" stroke-width="0.700"/><circle cx="8.200" cy="8.600" r="2.900" fill="#a3b9dc" stroke="#8199c4" stroke-width="0.700"/><path d="M8.600 11.400 Q11.200 11 13 14" fill="none" stroke="#15161c" stroke-width="2" stroke-linecap="round"/></svg>
<div class="n" style="left:617px;width:70px;top:4px">33.70</div>
<div class="dot g" style="left:698px;top:4px"></div>
<div class="cs" style="left:131px;top:0px"></div>
<div class="cs" style="left:251px;top:0px"></div>
<div class="cs" style="left:321px;top:0px"></div>
<div class="cs" style="left:391px;top:0px"></div>
<div class="cs" style="left:482px;top:0px"></div>
<div class="cs" style="left:552px;top:0px"></div>
<div class="cs" style="left:611px;top:0px"></div>
<div class="cs" style="left:691px;top:0px"></div>
</div>
<div class="gr" style="top:690px">
<svg style="left:7px;top:9px" width="7" height="6" viewBox="0 0 7 6"><path d="M6.500 0 L6.500 6 L0 6 Z" fill="#4a4a4a"/></svg>
<div style="left:21px;top:4px">Houston</div>
<svg style="left:117px;top:3px" width="14" height="15" viewBox="0 0 14 15"><path d="M1.300 1.600 H5.400 L7.800 4 V11 H1.300 Z" fill="#f1d0b3" stroke="#8a5a33" stroke-width="1.200" stroke-linejoin="round"/><path d="M5.400 1.600 V4 H7.800 Z" fill="#fdf0e2" stroke="#8a5a33" stroke-width="0.700"/><circle cx="8.200" cy="8.600" r="2.900" fill="#a3b9dc" stroke="#8199c4" stroke-width="0.700"/><path d="M8.600 11.400 Q11.200 11 13 14" fill="none" stroke="#15161c" stroke-width="2" stroke-linecap="round"/></svg>
<div style="left:137px;top:4px">04/18/2011 01:57 PM</div>
<div class="n" style="left:248px;width:70px;top:4px">19134.00</div>
<div class="n" style="left:318px;width:70px;top:4px">16454.00</div>
<div class="n" style="left:408px;width:70px;top:4px">2997.00</div>
<div class="n" style="left:478px;width:70px;top:4px">6401.00</div>
<div class="dot r" style="left:558px;top:4px"></div>
<div class="dot g" style="left:698px;top:4px"></div>
<div class="cs" style="left:131px;top:0px"></div>
<div class="cs" style="left:251px;top:0px"></div>
<div class="cs" style="left:321px;top:0px"></div>
<div class="cs" style="left:391px;top:0px"></div>
<div class="cs" style="left:482px;top:0px"></div>
<div class="cs" style="left:552px;top:0px"></div>
<div class="cs" style="left:611px;top:0px"></div>
<div class="cs" style="left:691px;top:0px"></div>
</div>
<div class="gr alt" style="top:713px">
<div style="left:39px;top:4px">Tank 1</div>
<svg style="left:117px;top:3px" width="14" height="15" viewBox="0 0 14 15"><path d="M1.300 1.600 H5.400 L7.800 4 V11 H1.300 Z" fill="#f1d0b3" stroke="#8a5a33" stroke-width="1.200" stroke-linejoin="round"/><path d="M5.400 1.600 V4 H7.800 Z" fill="#fdf0e2" stroke="#8a5a33" stroke-width="0.700"/><circle cx="8.200" cy="8.600" r="2.900" fill="#a3b9dc" stroke="#8199c4" stroke-width="0.700"/><path d="M8.600 11.400 Q11.200 11 13 14" fill="none" stroke="#15161c" stroke-width="2" stroke-linecap="round"/></svg>
<div style="left:137px;top:4px">04/18/2011 01:57 PM</div>
<div class="n" style="left:248px;width:70px;top:4px">8325.00</div>
<div class="n" style="left:318px;width:70px;top:4px">4788.00</div>
<div class="n" style="left:408px;width:70px;top:4px">999.00</div>
<div class="n" style="left:478px;width:70px;top:4px">4300.00</div>
<div class="dot g" style="left:558px;top:4px"></div>
<svg style="left:620.5px;top:3px" width="14" height="15" viewBox="0 0 14 15"><path d="M1.300 1.600 H5.400 L7.800 4 V11 H1.300 Z" fill="#f1d0b3" stroke="#8a5a33" stroke-width="1.200" stroke-linejoin="round"/><path d="M5.400 1.600 V4 H7.800 Z" fill="#fdf0e2" stroke="#8a5a33" stroke-width="0.700"/><circle cx="8.200" cy="8.600" r="2.900" fill="#a3b9dc" stroke="#8199c4" stroke-width="0.700"/><path d="M8.600 11.400 Q11.200 11 13 14" fill="none" stroke="#15161c" stroke-width="2" stroke-linecap="round"/></svg>
<div class="n" style="left:617px;width:70px;top:4px">35.00</div>
<div class="dot g" style="left:698px;top:4px"></div>
<div class="cs" style="left:131px;top:0px"></div>
<div class="cs" style="left:251px;top:0px"></div>
<div class="cs" style="left:321px;top:0px"></div>
<div class="cs" style="left:391px;top:0px"></div>
<div class="cs" style="left:482px;top:0px"></div>
<div class="cs" style="left:552px;top:0px"></div>
<div class="cs" style="left:611px;top:0px"></div>
<div class="cs" style="left:691px;top:0px"></div>
</div>
</div>
<div class="abs" style="left:1005px;top:224px;width:17px;height:723px;background:linear-gradient(90deg,#f1efe9,#faf9f5 45%,#fefdfa)"></div>
<div class="abs" style="left:1007px;top:225px;width:14px;height:15px;background:linear-gradient(90deg,#c6d4fb,#bccbf8 50%,#b0c2f4);border:1px solid #fff;border-radius:3px;box-shadow:0 1px 0 #7d9bdc"></div>
<svg style="left:1009.5px;top:229px" width="9" height="7" viewBox="0 0 9 7"><path d="M1 5.500 L4.500 2 L8 5.500" fill="none" stroke="#4d6185" stroke-width="2"/></svg>
<div class="abs" style="left:1007px;top:242px;width:14px;height:500px;background:linear-gradient(90deg,#c6d4fb,#bccbf8 50%,#b0c2f4);border:1px solid #fff;border-radius:3px;box-shadow:0 1px 0 #7d9bdc"></div>
<svg style="left:1010.5px;top:488px" width="7" height="8" viewBox="0 0 7 8"><path d="M0 0.500 H7 M0 2.500 H7 M0 4.500 H7 M0 6.500 H7" stroke="#eef3ff" stroke-width="1"/></svg>
<div class="abs" style="left:1007px;top:930px;width:14px;height:15px;background:linear-gradient(90deg,#c6d4fb,#bccbf8 50%,#b0c2f4);border:1px solid #fff;border-radius:3px;box-shadow:0 1px 0 #7d9bdc"></div>
<svg style="left:1009.5px;top:934px" width="9" height="7" viewBox="0 0 9 7"><path d="M1 1.500 L4.500 5 L8 1.500" fill="none" stroke="#4d6185" stroke-width="2"/></svg>
<div class="abs" style="left:262px;top:946px;width:761px;height:18px;background:linear-gradient(#f0efe9,#faf9f5 40%,#fdfcf9)"></div>
<div class="abs" style="left:263px;top:948px;width:15px;height:13px;background:linear-gradient(#c6d4fb,#bccbf8 50%,#b0c2f4);border:1px solid #fff;border-radius:3px;box-shadow:0 1px 0 #7d9bdc"></div>
<svg style="left:267px;top:950px" width="7" height="9" viewBox="0 0 7 9"><path d="M5.500 1 L2 4.500 L5.500 8" fill="none" stroke="#4d6185" stroke-width="2"/></svg>
<div class="abs" style="left:280px;top:948px;width:492px;height:13px;background:linear-gradient(#c6d4fb,#bccbf8 50%,#b0c2f4);border:1px solid #fff;border-radius:3px;box-shadow:0 1px 0 #7d9bdc"></div>
<svg style="left:523px;top:951px" width="8" height="7" viewBox="0 0 8 7"><path d="M0.500 0 V7 M2.500 0 V7 M4.500 0 V7 M6.500 0 V7" stroke="#eef3ff" stroke-width="1"/></svg>
<div class="abs" style="left:989px;top:948px;width:15px;height:13px;background:linear-gradient(#c6d4fb,#bccbf8 50%,#b0c2f4);border:1px solid #fff;border-radius:3px;box-shadow:0 1px 0 #7d9bdc"></div>
<svg style="left:993px;top:950px" width="7" height="9" viewBox="0 0 7 9"><path d="M1.500 1 L5 4.500 L1.500 8" fill="none" stroke="#4d6185" stroke-width="2"/></svg>
<div class="abs" style="left:262px;top:964px;width:761px;height:27px;background:linear-gradient(#50617a,#596a82 50%,#65768d)"></div>
<svg style="left:269px;top:970px" width="12" height="12" viewBox="0 0 12 12"><path d="M1.500 1 V11" stroke="#8c98aa" stroke-width="2"/><path d="M10.500 1 L3.500 6 L10.500 11 Z" fill="#8c98aa"/></svg>
<svg style="left:292px;top:970px" width="9" height="12" viewBox="0 0 9 12"><path d="M8 1.500 L1.500 6 L8 10.500 Z" fill="#8c98aa"/></svg>
<div class="abs" style="left:311px;top:970px;width:1px;height:14px;background:#2f3c50"></div>
<div class="abs" style="left:390px;top:970px;width:1px;height:14px;background:#2f3c50"></div>
<div class="abs" style="left:440px;top:970px;width:1px;height:14px;background:#2f3c50"></div>
<div class="t" style="left:314px;top:970px;font-size:10.7px;color:#000">Page</div>
<div class="abs" style="left:338px;top:967px;width:30px;height:20px;background:#fff;border:1px solid #8b9cb5"></div>
<div class="t" style="left:342px;top:970px;font-size:10.7px;color:#000">1</div>
<div class="t" style="left:368px;top:970px;font-size:10.7px;color:#000">of 2</div>
<svg style="left:400px;top:970px" width="8" height="12" viewBox="0 0 8 12"><path d="M1 1 L7 6 L1 11 Z" fill="#3f86f0"/><path d="M1 1 L7 6 L1 6 Z" fill="#6fa9ff"/></svg>
<svg style="left:420px;top:970px" width="12" height="12" viewBox="0 0 12 12"><path d="M1 1 L7.500 6 L1 11 Z" fill="#3f86f0"/><path d="M1 1 L7.500 6 L1 6 Z" fill="#6fa9ff"/><path d="M10 1 V11" stroke="#3f86f0" stroke-width="2"/></svg>
<div class="t" style="left:910px;top:970px;font-size:10.7px;letter-spacing:0.1px;color:#000">Displaying 1 - 10 of 16</div>
<style>
.cb{position:absolute;left:1045px;width:13px;height:13px;border:1px solid #8f9499;background:linear-gradient(135deg,#d6d9de,#eceef0 60%,#fbfbfb);box-shadow:inset 0 0 0 1px #eef0f2}
.cl{position:absolute;left:1062px;line-height:14px;height:14px;font-size:10.7px;white-space:nowrap}
</style>
<div class="ph" style="left:1026px;top:173px;width:252px"></div>
<div class="pt tahb" style="left:1031px;top:180px">Details</div>
<div class="tbtn" style="left:1260px;top:178px;height:14px"></div>
<svg style="left:1260px;top:178px" width="15" height="14" viewBox="0 0 15 14"><path d="M3.500 3.500 L7 7 L3.500 10.500 M7.500 3.500 L11 7 L7.500 10.500" fill="none" stroke="#fff" stroke-width="1.200"/></svg>
<div class="sh" style="left:1027px;top:199px;width:250px"></div>
<div class="pt tah" style="left:1031px;top:204px">Additional Data</div>
<div class="tbtn" style="left:1259px;top:203px;height:14px"></div>
<svg style="left:1259px;top:203px" width="15" height="14" viewBox="0 0 15 14"><path d="M7.500 3 V11 M3.500 7 H11.500" stroke="#fff" stroke-width="1.200"/></svg>
<div class="sh" style="left:1027px;top:223px;width:250px"></div>
<div class="pt tah" style="left:1031px;top:228px">Display Options</div>
<div class="tbtn" style="left:1241px;top:227px;height:14px"></div>
<svg style="left:1241px;top:227.0px" width="15" height="14" viewBox="0 0 15 14"><rect x="3" y="2.500" width="9.200" height="9.200" fill="#fff"/><rect x="5" y="3.700" width="5" height="1.300" fill="#7c8ba1"/><rect x="4.600" y="7.600" width="6" height="2.600" fill="#fff" stroke="#566a88" stroke-width="1"/></svg>
<div class="tbtn" style="left:1259px;top:227px;height:14px"></div>
<svg style="left:1259px;top:227px" width="15" height="14" viewBox="0 0 15 14"><path d="M3.500 7 H11.500" stroke="#fff" stroke-width="1.500"/></svg>
<div class="wbody" style="left:1028px;top:245px;width:248px;height:673px"></div>
<div class="cb" style="top:251px"></div>
<svg style="left:1047px;top:253px" width="9" height="9" viewBox="0 0 9 9"><path d="M1 3.500 L3.500 7 L8 0.800" fill="none" stroke="#3b4ea8" stroke-width="1.800"/></svg>
<div class="cl" style="top:250px">Name</div>
<div class="cb" style="top:272px"></div>
<div class="cl" style="top:271px">Grade</div>
<div class="cb" style="top:293px"></div>
<div class="cl" style="top:292px">Status</div>
<div class="cb" style="top:314px"></div>
<div class="cl" style="top:313px">Date</div>
<div class="cb" style="top:335px"></div>
<div class="cl" style="top:334px">Inventory</div>
<div class="cb" style="top:356px"></div>
<div class="cl" style="top:355px">% Full</div>
<div class="cb" style="top:377px"></div>
<div class="cl" style="top:376px">Ullage</div>
<div class="cb" style="top:398px"></div>
<svg style="left:1047px;top:400px" width="9" height="9" viewBox="0 0 9 9"><path d="M1 3.500 L3.500 7 L8 0.800" fill="none" stroke="#3b4ea8" stroke-width="1.800"/></svg>
<div class="cl" style="top:397px">Close Date</div>
<div class="cb" style="top:419px"></div>
<svg style="left:1047px;top:421px" width="9" height="9" viewBox="0 0 9 9"><path d="M1 3.500 L3.500 7 L8 0.800" fill="none" stroke="#3b4ea8" stroke-width="1.800"/></svg>
<div class="cl" style="top:418px">Open Inv</div>
<div class="cb" style="top:440px"></div>
<svg style="left:1047px;top:442px" width="9" height="9" viewBox="0 0 9 9"><path d="M1 3.500 L3.500 7 L8 0.800" fill="none" stroke="#3b4ea8" stroke-width="1.800"/></svg>
<div class="cl" style="top:439px">Close Inv</div>
<div class="cb" style="top:461px"></div>
<svg style="left:1047px;top:463px" width="9" height="9" viewBox="0 0 9 9"><path d="M1 3.500 L3.500 7 L8 0.800" fill="none" stroke="#3b4ea8" stroke-width="1.800"/></svg>
<div class="cl" style="top:460px">Deliveries</div>
<div class="cb" style="top:482px"></div>
<svg style="left:1047px;top:484px" width="9" height="9" viewBox="0 0 9 9"><path d="M1 3.500 L3.500 7 L8 0.800" fill="none" stroke="#3b4ea8" stroke-width="1.800"/></svg>
<div class="cl" style="top:481px">Sales</div>
<div class="cb" style="top:503px"></div>
<svg style="left:1047px;top:505px" width="9" height="9" viewBox="0 0 9 9"><path d="M1 3.500 L3.500 7 L8 0.800" fill="none" stroke="#3b4ea8" stroke-width="1.800"/></svg>
<div class="cl" style="top:502px">1 Day</div>
<div class="cb" style="top:524px"></div>
<svg style="left:1047px;top:526px" width="9" height="9" viewBox="0 0 9 9"><path d="M1 3.500 L3.500 7 L8 0.800" fill="none" stroke="#3b4ea8" stroke-width="1.800"/></svg>
<div class="cl" style="top:523px">1 Day Var</div>
<div class="cb" style="top:545px"></div>
<svg style="left:1047px;top:547px" width="9" height="9" viewBox="0 0 9 9"><path d="M1 3.500 L3.500 7 L8 0.800" fill="none" stroke="#3b4ea8" stroke-width="1.800"/></svg>
<div class="cl" style="top:544px">5 Day</div>
<div class="cb" style="top:566px"></div>
<svg style="left:1047px;top:568px" width="9" height="9" viewBox="0 0 9 9"><path d="M1 3.500 L3.500 7 L8 0.800" fill="none" stroke="#3b4ea8" stroke-width="1.800"/></svg>
<div class="cl" style="top:565px">5 Day Var</div>
<div class="cb" style="top:587px"></div>
<svg style="left:1047px;top:589px" width="9" height="9" viewBox="0 0 9 9"><path d="M1 3.500 L3.500 7 L8 0.800" fill="none" stroke="#3b4ea8" stroke-width="1.800"/></svg>
<div class="cl" style="top:586px">30 Day</div>
<div class="cb" style="top:608px"></div>
<svg style="left:1047px;top:610px" width="9" height="9" viewBox="0 0 9 9"><path d="M1 3.500 L3.500 7 L8 0.800" fill="none" stroke="#3b4ea8" stroke-width="1.800"/></svg>
<div class="cl" style="top:607px">30 Day Var</div>
<div class="sh" style="left:1027px;top:921px;width:250px"></div>
<div class="pt tah" style="left:1031px;top:926px">Filters</div>
<div class="tbtn" style="left:1259px;top:925px;height:14px"></div>
<svg style="left:1259px;top:925px" width="15" height="14" viewBox="0 0 15 14"><path d="M7.500 3 V11 M3.500 7 H11.500" stroke="#fff" stroke-width="1.200"/></svg>
<div class="sh" style="left:1027px;top:945px;width:250px"></div>
<div class="pt tah" style="left:1031px;top:950px">Actions</div>
<div class="tbtn" style="left:1259px;top:949px;height:14px"></div>
<svg style="left:1259px;top:949px" width="15" height="14" viewBox="0 0 15 14"><path d="M7.500 3 V11 M3.500 7 H11.500" stroke="#fff" stroke-width="1.200"/></svg>
<div class="sh" style="left:1027px;top:969px;width:250px"></div>
<div class="pt tah" style="left:1031px;top:974px">Site Forecast</div>
<div class="tbtn" style="left:1259px;top:973px;height:14px"></div>
<svg style="left:1259px;top:973px" width="15" height="14" viewBox="0 0 15 14"><path d="M7.500 3 V11 M3.500 7 H11.500" stroke="#fff" stroke-width="1.200"/></svg>
<div class="tbtn" style="left:1241px;top:925px;height:14px"></div>
<svg style="left:1241px;top:925.0px" width="15" height="14" viewBox="0 0 15 14"><rect x="3" y="2.500" width="9.200" height="9.200" fill="#fff"/><rect x="5" y="3.700" width="5" height="1.300" fill="#7c8ba1"/><rect x="4.600" y="7.600" width="6" height="2.600" fill="#fff" stroke="#566a88" stroke-width="1"/></svg>
<div class="tbtn" style="left:1242px;top:973px;height:14px"></div>
<svg style="left:1242px;top:973px" width="15" height="14" viewBox="0 0 15 14"><path d="M3.500 5.500 H10.500 M8.500 3 L11 5.500 M11.500 8.500 H4.500 M6.500 11 L4 8.500" fill="none" stroke="#fff" stroke-width="1.500"/></svg>
<svg style="left:1208px;top:925px" width="15" height="15" viewBox="0 0 15 15"><circle cx="7.500" cy="7.500" r="7" fill="#ecebe6" stroke="#cfcdc6" stroke-width="0.600"/><path d="M9.300 10.800 A3.400 3.400 0 1 1 9.300 5" fill="none" stroke="#3a3a3a" stroke-width="1.500"/><path d="M7.300 3 L11.800 3.300 L10 7.200 Z" fill="#3a3a3a"/></svg>
<svg style="left:1224.500px;top:925.500px" width="14" height="14" viewBox="0 0 16 16"><rect x="0.500" y="0.500" width="9" height="9" fill="#e8e8e4" stroke="#8c8c88"/><rect x="3" y="3" width="9" height="9" fill="#e8e8e4" stroke="#8c8c88"/><rect x="5.500" y="5.500" width="10" height="10" fill="#fff" stroke="#8c8c88"/><path d="M7.500 10 L10 13.500 L14 7" fill="none" stroke="#2a3f9c" stroke-width="1.700"/></svg>
<div class="abs" style="left:0;top:995px;width:1284px;height:2px;background:#2458d4"></div>
<div class="abs" style="left:0;top:995px;width:96px;height:2px;background:#3c9a3a"></div>
<div class="abs" style="left:0;top:0;width:2px;height:995px;background:#fff"></div>
<div class="abs" style="left:1282px;top:0;width:2px;height:995px;background:#fff"></div>
<div class="abs" style="left:0;top:0;width:1284px;height:2px;background:#fff"></div>
</div></body></html>
